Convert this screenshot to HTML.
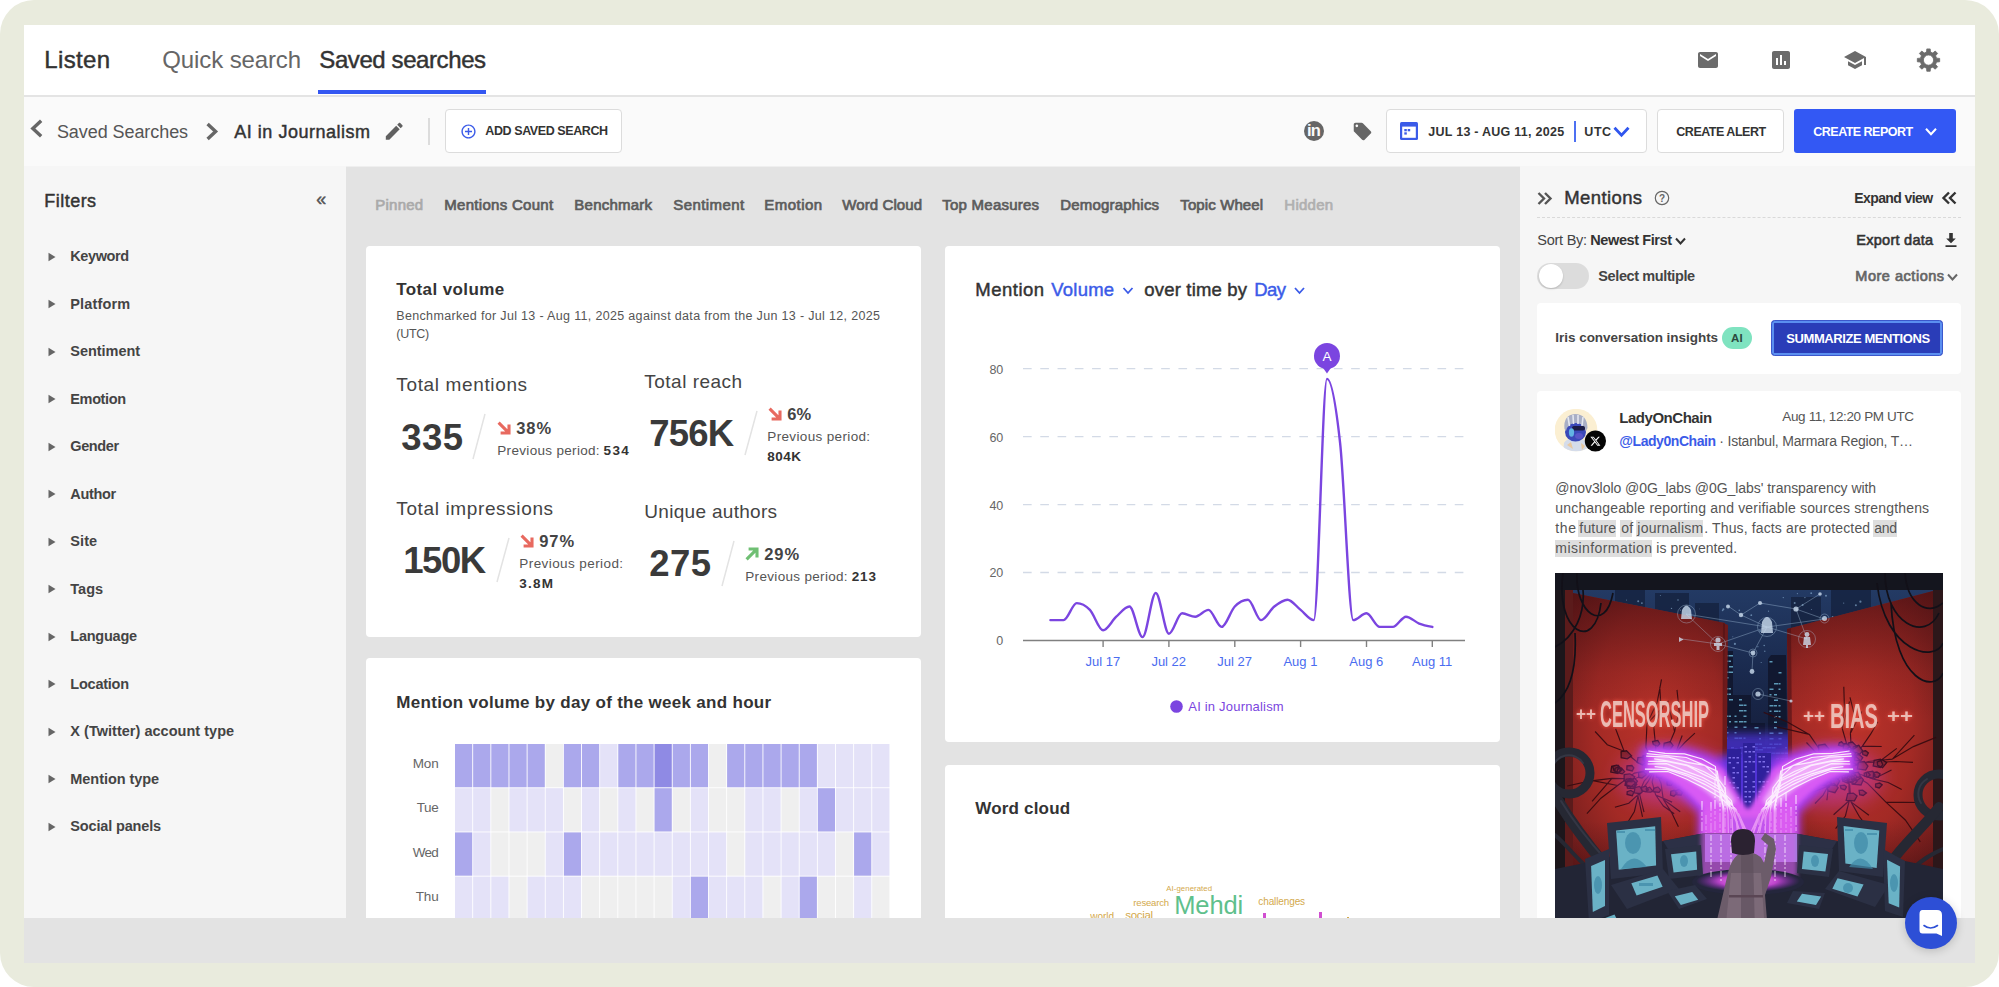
<!DOCTYPE html><html lang="en"><head><meta charset="utf-8"><title>Listen - Saved searches</title><style>
*{box-sizing:border-box;margin:0;padding:0}
html,body{width:1999px;height:987px;overflow:hidden;background:#fff}
body{font-family:"Liberation Sans",Arial,sans-serif;position:relative}
.a{position:absolute}
.t{position:absolute;white-space:nowrap}
#frame{position:absolute;left:0;top:0;width:1999px;height:987px;background:#e9ebdd;border-radius:34px}
#app{position:absolute;left:24px;top:25px;width:1951px;height:938px;background:#e3e3e3;overflow:hidden}
.card{position:absolute;background:#fff;border-radius:4px;overflow:hidden}
.btn{position:absolute;background:#fff;border:1px solid #dcdcdc;border-radius:4px}
svg{position:absolute;overflow:visible}
</style></head><body>
<div id="frame"></div>
<div id="app"><div class="a" id="root" style="left:-24px;top:-25px;width:1999px;height:987px">
<div class="a" style="left:24px;top:25px;width:1951px;height:70px;background:#fff"></div>
<div class="a" style="left:24px;top:95px;width:1951px;height:2px;background:#e4e4e4"></div>
<span class="t" style="left:44.3px;top:44.0px;font-size:24px;line-height:31px;color:#333;-webkit-text-stroke:0.45px currentColor;letter-spacing:0.351px;">Listen</span>
<span class="t" style="left:162.3px;top:44.0px;font-size:24px;line-height:31px;color:#666;letter-spacing:-0.114px;">Quick search</span>
<span class="t" style="left:319.3px;top:44.0px;font-size:24px;line-height:31px;color:#333;-webkit-text-stroke:0.45px currentColor;letter-spacing:-0.408px;">Saved searches</span>
<div class="a" style="left:318px;top:90px;width:168px;height:4px;background:#3457f2"></div>
<svg style="left:1696.0px;top:48.0px" width="24" height="24" viewBox="0 0 24 24"><path fill="#6b6b6b" d="M20 4H4c-1.1 0-1.99.9-1.99 2L2 18c0 1.1.9 2 2 2h16c1.1 0 2-.9 2-2V6c0-1.1-.9-2-2-2zm0 4l-8 5-8-5V6l8 5 8-5v2z"/></svg>
<svg style="left:1769.3px;top:48.0px" width="24" height="24" viewBox="0 0 24 24"><path fill="#6b6b6b" d="M19 3H5c-1.1 0-2 .9-2 2v14c0 1.1.9 2 2 2h14c1.1 0 2-.9 2-2V5c0-1.1-.9-2-2-2zM9 17H7v-7h2v7zm4 0h-2V7h2v10zm4 0h-2v-4h2v4z"/></svg>
<svg style="left:1843.0px;top:48.0px" width="24" height="24" viewBox="0 0 24 24"><path fill="#6b6b6b" d="M5 13.18v4L12 21l7-3.82v-4L12 17l-7-3.82zM12 3L1 9l11 6 9-4.91V17h2V9L12 3z"/></svg>
<svg style="left:0;top:0" width="1999" height="987"><path d="M1926.53,52.04 L1926.81,48.93 L1930.19,48.93 L1930.47,52.04 L1932.81,53.00 L1935.21,51.01 L1937.59,53.39 L1935.60,55.79 L1936.56,58.13 L1939.67,58.41 L1939.67,61.79 L1936.56,62.07 L1935.60,64.41 L1937.59,66.81 L1935.21,69.19 L1932.81,67.20 L1930.47,68.16 L1930.19,71.27 L1926.81,71.27 L1926.53,68.16 L1924.19,67.20 L1921.79,69.19 L1919.41,66.81 L1921.40,64.41 L1920.44,62.07 L1917.33,61.79 L1917.33,58.41 L1920.44,58.13 L1921.40,55.79 L1919.41,53.39 L1921.79,51.01 L1924.19,53.00Z M1923.4,60.1 a5.1,5.1 0 1,0 10.2,0 a5.1,5.1 0 1,0 -10.2,0Z" fill="#6b6b6b" fill-rule="evenodd" stroke="#6b6b6b" stroke-width="0.8" stroke-linejoin="round"/></svg>
<div class="a" style="left:24px;top:97px;width:1951px;height:69px;background:#fafafa"></div>
<div class="a" style="left:24px;top:165.500px;width:1951px;height:1px;background:#efefef"></div>
<svg style="left:0;top:0" width="1999" height="987"><polyline points="41.15,120.85 32.85,128.6 41.15,136.35" fill="none" stroke="#666" stroke-width="3.4" stroke-linejoin="miter"/></svg>
<span class="t" style="left:56.9px;top:120.7px;font-size:18px;line-height:23px;color:#555;letter-spacing:-0.069px;">Saved Searches</span>
<svg style="left:0;top:0" width="1999" height="987"><polyline points="207.6,123.9 215.6,131.4 207.6,138.9" fill="none" stroke="#666" stroke-width="3.4" stroke-linejoin="miter"/></svg>
<span class="t" style="left:234.3px;top:120.9px;font-size:18px;line-height:23px;color:#333;-webkit-text-stroke:0.45px currentColor;letter-spacing:0.516px;">AI in Journalism</span>
<svg style="left:382.6px;top:119.9px" width="22.5" height="22.5" viewBox="0 0 24 24"><path fill="#606060" d="M3 17.25V21h3.75L17.81 9.94l-3.75-3.75L3 17.25zM20.71 7.04c.39-.39.39-1.02 0-1.41l-2.34-2.34c-.39-.39-1.02-.39-1.41 0l-1.83 1.83 3.75 3.75 1.83-1.83z"/></svg>
<div class="a" style="left:428px;top:118px;width:2px;height:27px;background:#dcdcdc"></div>
<div class="btn" style="left:445px;top:109px;width:177px;height:44px"></div>
<svg style="left:459.5px;top:122.5px" width="17" height="17" viewBox="0 0 24 24"><path fill="#3b5be8" d="M13 7h-2v4H7v2h4v4h2v-4h4v-2h-4V7zm-1-5C6.48 2 2 6.48 2 12s4.48 10 10 10 10-4.48 10-10S17.52 2 12 2zm0 18c-4.41 0-8-3.59-8-8s3.59-8 8-8 8 3.59 8 8-3.59 8-8 8z"/></svg>
<span class="t" style="left:485.3px;top:123.1px;font-size:12.5px;line-height:16px;color:#333;font-weight:700;letter-spacing:-0.410px;">ADD SAVED SEARCH</span>
<svg style="left:1303px;top:120px" width="22" height="22" viewBox="0 0 22 22"><circle cx="11" cy="11" r="10" fill="#666"/><text x="10.600" y="16.300" font-family="Liberation Sans,Arial,sans-serif" font-size="16.500" font-weight="700" fill="#fafafa" text-anchor="middle" letter-spacing="-0.800">in</text></svg>
<svg style="left:1352.0px;top:121.0px" width="21" height="21" viewBox="0 0 24 24"><path fill="#666" d="M21.41 11.58l-9-9C12.05 2.22 11.55 2 11 2H4c-1.1 0-2 .9-2 2v7c0 .55.22 1.05.59 1.42l9 9c.36.36.86.58 1.41.58.55 0 1.05-.22 1.41-.59l7-7c.37-.36.59-.86.59-1.41 0-.55-.23-1.06-.59-1.42zM5.5 7C4.67 7 4 6.33 4 5.500S4.67 4 5.500 4 7 4.67 7 5.500 6.330 7 5.500 7z"/></svg>
<div class="btn" style="left:1385.500px;top:109px;width:261px;height:44px"></div>
<svg style="left:1400px;top:122px" width="18" height="18" viewBox="0 0 18 18"><rect x="0" y="0" width="18" height="18" rx="1.500" fill="#3b5be8"/><rect x="2.200" y="4.600" width="13.600" height="11.200" fill="#fff"/><rect x="4.300" y="7" width="2.500" height="2.300" fill="#3b5be8"/><rect x="7.700" y="7" width="2.500" height="2.300" fill="#3b5be8"/><rect x="4.300" y="10.300" width="2.500" height="2.300" fill="#3b5be8"/></svg>
<span class="t" style="left:1428.3px;top:123.5px;font-size:12.5px;line-height:16px;color:#333;font-weight:700;letter-spacing:0.258px;">JUL 13 - AUG 11, 2025</span>
<div class="a" style="left:1574.200px;top:121px;width:1.600px;height:21px;background:#4d70f2"></div>
<span class="t" style="left:1584.3px;top:123.5px;font-size:12.5px;line-height:16px;color:#333;font-weight:700;letter-spacing:0.554px;">UTC</span>
<svg style="left:0;top:0" width="1999" height="987"><polyline points="1614.5,127.75 1621.5,135.25 1628.5,127.75" fill="none" stroke="#3056ee" stroke-width="2.8" stroke-linejoin="miter"/></svg>
<div class="btn" style="left:1656.500px;top:109px;width:127px;height:44px"></div>
<span class="t" style="left:1676.3px;top:123.5px;font-size:12.5px;line-height:16px;color:#333;font-weight:700;letter-spacing:-0.485px;">CREATE ALERT</span>
<div class="a" style="left:1794px;top:109px;width:162px;height:44px;background:#3358f4;border-radius:3px"></div>
<span class="t" style="left:1813.3px;top:123.5px;font-size:12.5px;line-height:16px;color:#fff;font-weight:700;letter-spacing:-0.519px;">CREATE REPORT</span>
<svg style="left:0;top:0" width="1999" height="987"><polyline points="1926.0,128.75 1931,134.25 1936.0,128.75" fill="none" stroke="#fff" stroke-width="2" stroke-linejoin="miter"/></svg>
<div class="a" style="left:24px;top:166px;width:322px;height:752px;background:#f6f6f6"></div>
<span class="t" style="left:44.3px;top:189.5px;font-size:18px;line-height:23px;color:#333;-webkit-text-stroke:0.45px currentColor;letter-spacing:0.466px;">Filters</span>
<span class="t" style="left:316.3px;top:187.5px;font-size:18px;line-height:23px;color:#555;-webkit-text-stroke:0.45px currentColor;letter-spacing:1.788px;">«</span>
<svg style="left:48px;top:251.5px" width="8" height="10"><polygon points="0.500,0.800 7.500,5 0.500,9.200" fill="#666"/></svg>
<span class="t" style="left:70.3px;top:247.0px;font-size:14.5px;line-height:19px;color:#444;font-weight:700;letter-spacing:-0.405px;">Keyword</span>
<svg style="left:48px;top:299.0px" width="8" height="10"><polygon points="0.500,0.800 7.500,5 0.500,9.200" fill="#666"/></svg>
<span class="t" style="left:70.3px;top:294.5px;font-size:14.5px;line-height:19px;color:#444;font-weight:700;letter-spacing:0.141px;">Platform</span>
<svg style="left:48px;top:346.5px" width="8" height="10"><polygon points="0.500,0.800 7.500,5 0.500,9.200" fill="#666"/></svg>
<span class="t" style="left:70.3px;top:342.0px;font-size:14.5px;line-height:19px;color:#444;font-weight:700;letter-spacing:-0.036px;">Sentiment</span>
<svg style="left:48px;top:394.0px" width="8" height="10"><polygon points="0.500,0.800 7.500,5 0.500,9.200" fill="#666"/></svg>
<span class="t" style="left:70.3px;top:389.5px;font-size:14.5px;line-height:19px;color:#444;font-weight:700;letter-spacing:-0.365px;">Emotion</span>
<svg style="left:48px;top:441.5px" width="8" height="10"><polygon points="0.500,0.800 7.500,5 0.500,9.200" fill="#666"/></svg>
<span class="t" style="left:70.3px;top:437.0px;font-size:14.5px;line-height:19px;color:#444;font-weight:700;letter-spacing:-0.392px;">Gender</span>
<svg style="left:48px;top:489.0px" width="8" height="10"><polygon points="0.500,0.800 7.500,5 0.500,9.200" fill="#666"/></svg>
<span class="t" style="left:70.3px;top:484.5px;font-size:14.5px;line-height:19px;color:#444;font-weight:700;letter-spacing:-0.342px;">Author</span>
<svg style="left:48px;top:536.5px" width="8" height="10"><polygon points="0.500,0.800 7.500,5 0.500,9.200" fill="#666"/></svg>
<span class="t" style="left:70.3px;top:532.0px;font-size:14.5px;line-height:19px;color:#444;font-weight:700;letter-spacing:0.070px;">Site</span>
<svg style="left:48px;top:584.0px" width="8" height="10"><polygon points="0.500,0.800 7.500,5 0.500,9.200" fill="#666"/></svg>
<span class="t" style="left:70.3px;top:579.5px;font-size:14.5px;line-height:19px;color:#444;font-weight:700;letter-spacing:0.013px;">Tags</span>
<svg style="left:48px;top:631.5px" width="8" height="10"><polygon points="0.500,0.800 7.500,5 0.500,9.200" fill="#666"/></svg>
<span class="t" style="left:70.3px;top:627.0px;font-size:14.5px;line-height:19px;color:#444;font-weight:700;letter-spacing:-0.238px;">Language</span>
<svg style="left:48px;top:679.0px" width="8" height="10"><polygon points="0.500,0.800 7.500,5 0.500,9.200" fill="#666"/></svg>
<span class="t" style="left:70.3px;top:674.5px;font-size:14.5px;line-height:19px;color:#444;font-weight:700;letter-spacing:-0.229px;">Location</span>
<svg style="left:48px;top:726.5px" width="8" height="10"><polygon points="0.500,0.800 7.500,5 0.500,9.200" fill="#666"/></svg>
<span class="t" style="left:70.3px;top:722.0px;font-size:14.5px;line-height:19px;color:#444;font-weight:700;letter-spacing:0.024px;">X (Twitter) account type</span>
<svg style="left:48px;top:774.0px" width="8" height="10"><polygon points="0.500,0.800 7.500,5 0.500,9.200" fill="#666"/></svg>
<span class="t" style="left:70.3px;top:769.5px;font-size:14.5px;line-height:19px;color:#444;font-weight:700;letter-spacing:-0.054px;">Mention type</span>
<svg style="left:48px;top:821.5px" width="8" height="10"><polygon points="0.500,0.800 7.500,5 0.500,9.200" fill="#666"/></svg>
<span class="t" style="left:70.3px;top:817.0px;font-size:14.5px;line-height:19px;color:#444;font-weight:700;letter-spacing:-0.155px;">Social panels</span>
<span class="t" style="left:375.3px;top:194.5px;font-size:15px;line-height:20px;color:#aaa;-webkit-text-stroke:0.7px currentColor;letter-spacing:0.218px;">Pinned</span>
<span class="t" style="left:444.3px;top:194.5px;font-size:15px;line-height:20px;color:#5c5c5c;-webkit-text-stroke:0.7px currentColor;letter-spacing:0.287px;">Mentions Count</span>
<span class="t" style="left:574.3px;top:194.5px;font-size:15px;line-height:20px;color:#5c5c5c;-webkit-text-stroke:0.7px currentColor;letter-spacing:0.241px;">Benchmark</span>
<span class="t" style="left:673.3px;top:194.5px;font-size:15px;line-height:20px;color:#5c5c5c;-webkit-text-stroke:0.7px currentColor;letter-spacing:0.407px;">Sentiment</span>
<span class="t" style="left:764.3px;top:194.5px;font-size:15px;line-height:20px;color:#5c5c5c;-webkit-text-stroke:0.7px currentColor;letter-spacing:0.461px;">Emotion</span>
<span class="t" style="left:842.3px;top:194.5px;font-size:15px;line-height:20px;color:#5c5c5c;-webkit-text-stroke:0.7px currentColor;letter-spacing:0.096px;">Word Cloud</span>
<span class="t" style="left:942.3px;top:194.5px;font-size:15px;line-height:20px;color:#5c5c5c;-webkit-text-stroke:0.7px currentColor;letter-spacing:0.234px;">Top Measures</span>
<span class="t" style="left:1060.3px;top:194.5px;font-size:15px;line-height:20px;color:#5c5c5c;-webkit-text-stroke:0.7px currentColor;letter-spacing:0.189px;">Demographics</span>
<span class="t" style="left:1180.3px;top:194.5px;font-size:15px;line-height:20px;color:#5c5c5c;-webkit-text-stroke:0.7px currentColor;letter-spacing:0.109px;">Topic Wheel</span>
<span class="t" style="left:1284.3px;top:194.5px;font-size:15px;line-height:20px;color:#b0b0b0;-webkit-text-stroke:0.7px currentColor;letter-spacing:0.252px;">Hidden</span>
<div class="card" style="left:366px;top:246px;width:555px;height:391px"></div>
<span class="t" style="left:396.3px;top:279.0px;font-size:17px;line-height:22px;color:#333;font-weight:700;letter-spacing:0.384px;">Total volume</span>
<span class="t" style="left:396.3px;top:308.0px;font-size:12.5px;line-height:16px;color:#555;letter-spacing:0.334px;">Benchmarked for Jul 13 - Aug 11, 2025 against data from the Jun 13 - Jul 12, 2025</span>
<span class="t" style="left:396.3px;top:326.0px;font-size:12.5px;line-height:16px;color:#555;letter-spacing:-0.305px;">(UTC)</span>
<span class="t" style="left:396.3px;top:371.9px;font-size:19px;line-height:25px;color:#444;letter-spacing:0.638px;">Total mentions</span>
<span class="t" style="left:401.3px;top:414.1px;font-size:36.5px;line-height:47px;color:#3a3a3a;font-weight:700;letter-spacing:0.449px;">335</span>
<svg style="left:0;top:0" width="1999" height="987"><line x1="473" y1="459" x2="485" y2="414" stroke="#e3e3e3" stroke-width="1.500"/></svg>
<svg style="left:497px;top:421px" width="14" height="14" viewBox="0 0 14 14"><path d="M1.600 1.600 L11.300 11.300 M3.600 12 H12 V3.600" fill="none" stroke="#e8695f" stroke-width="3.100"/></svg>
<span class="t" style="left:516.3px;top:417.5px;font-size:16.5px;line-height:21px;color:#444;font-weight:700;letter-spacing:0.888px;">38%</span>
<span class="t" style="left:497.3px;top:442.4px;font-size:13.5px;line-height:18px;color:#555;letter-spacing:0.317px;">Previous period:</span>
<span class="t" style="left:603.5px;top:442.4px;font-size:13.5px;line-height:18px;color:#333;font-weight:700;letter-spacing:1.388px;">534</span>
<span class="t" style="left:644.3px;top:368.5px;font-size:19px;line-height:25px;color:#444;letter-spacing:0.486px;">Total reach</span>
<span class="t" style="left:649.3px;top:409.9px;font-size:36.5px;line-height:47px;color:#3a3a3a;font-weight:700;letter-spacing:-0.821px;">756K</span>
<svg style="left:0;top:0" width="1999" height="987"><line x1="745" y1="455" x2="757" y2="411" stroke="#e3e3e3" stroke-width="1.500"/></svg>
<svg style="left:768px;top:407px" width="14" height="14" viewBox="0 0 14 14"><path d="M1.600 1.600 L11.300 11.300 M3.600 12 H12 V3.600" fill="none" stroke="#e8695f" stroke-width="3.100"/></svg>
<span class="t" style="left:787.3px;top:403.5px;font-size:16.5px;line-height:21px;color:#444;font-weight:700;letter-spacing:-0.048px;">6%</span>
<span class="t" style="left:767.3px;top:428.0px;font-size:13.5px;line-height:18px;color:#555;letter-spacing:0.350px;">Previous period:</span>
<span class="t" style="left:767.3px;top:448.0px;font-size:13.5px;line-height:18px;color:#333;font-weight:700;letter-spacing:0.509px;">804K</span>
<span class="t" style="left:396.3px;top:495.5px;font-size:19px;line-height:25px;color:#444;letter-spacing:0.626px;">Total impressions</span>
<span class="t" style="left:403.3px;top:536.5px;font-size:36.5px;line-height:47px;color:#3a3a3a;font-weight:700;letter-spacing:-1.487px;">150K</span>
<svg style="left:0;top:0" width="1999" height="987"><line x1="497" y1="582" x2="509" y2="538" stroke="#e3e3e3" stroke-width="1.500"/></svg>
<svg style="left:520px;top:534px" width="14" height="14" viewBox="0 0 14 14"><path d="M1.600 1.600 L11.300 11.300 M3.600 12 H12 V3.600" fill="none" stroke="#e8695f" stroke-width="3.100"/></svg>
<span class="t" style="left:539.3px;top:530.5px;font-size:16.5px;line-height:21px;color:#444;font-weight:700;letter-spacing:0.888px;">97%</span>
<span class="t" style="left:519.3px;top:555.0px;font-size:13.5px;line-height:18px;color:#555;letter-spacing:0.417px;">Previous period:</span>
<span class="t" style="left:519.3px;top:575.0px;font-size:13.5px;line-height:18px;color:#333;font-weight:700;letter-spacing:1.263px;">3.8M</span>
<span class="t" style="left:644.3px;top:498.5px;font-size:19px;line-height:25px;color:#444;letter-spacing:0.303px;">Unique authors</span>
<span class="t" style="left:649.3px;top:539.8px;font-size:36.5px;line-height:47px;color:#3a3a3a;font-weight:700;letter-spacing:0.449px;">275</span>
<svg style="left:0;top:0" width="1999" height="987"><line x1="722" y1="586" x2="734" y2="541" stroke="#e3e3e3" stroke-width="1.500"/></svg>
<svg style="left:745px;top:547px" width="14" height="14" viewBox="0 0 14 14"><path d="M1.600 12.400 L11.300 2.700 M3.600 2 H12 V10.400" fill="none" stroke="#6fbf73" stroke-width="3.100"/></svg>
<span class="t" style="left:764.3px;top:543.5px;font-size:16.5px;line-height:21px;color:#444;font-weight:700;letter-spacing:0.888px;">29%</span>
<span class="t" style="left:745.3px;top:568.4px;font-size:13.5px;line-height:18px;color:#555;letter-spacing:0.317px;">Previous period:</span>
<span class="t" style="left:851.7px;top:568.4px;font-size:13.5px;line-height:18px;color:#333;font-weight:700;letter-spacing:0.888px;">213</span>
<div class="card" style="left:366px;top:658px;width:555px;height:270px"></div>
<span class="t" style="left:396.3px;top:692.0px;font-size:17px;line-height:22px;color:#333;font-weight:700;letter-spacing:0.296px;">Mention volume by day of the week and hour</span>
<svg style="left:0;top:0" width="1999" height="987"><rect x="455.00" y="744.00" width="17.24" height="43.30" fill="#aba8ec"/><rect x="473.14" y="744.00" width="17.24" height="43.30" fill="#aba8ec"/><rect x="491.28" y="744.00" width="17.24" height="43.30" fill="#aba8ec"/><rect x="509.42" y="744.00" width="17.24" height="43.30" fill="#aba8ec"/><rect x="527.56" y="744.00" width="17.24" height="43.30" fill="#aba8ec"/><rect x="545.70" y="744.00" width="17.24" height="43.30" fill="#efefef"/><rect x="563.84" y="744.00" width="17.24" height="43.30" fill="#aba8ec"/><rect x="581.98" y="744.00" width="17.24" height="43.30" fill="#aba8ec"/><rect x="600.12" y="744.00" width="17.24" height="43.30" fill="#e4e2f8"/><rect x="618.26" y="744.00" width="17.24" height="43.30" fill="#aba8ec"/><rect x="636.40" y="744.00" width="17.24" height="43.30" fill="#aba8ec"/><rect x="654.54" y="744.00" width="17.24" height="43.30" fill="#8f8ae4"/><rect x="672.68" y="744.00" width="17.24" height="43.30" fill="#aba8ec"/><rect x="690.82" y="744.00" width="17.24" height="43.30" fill="#aba8ec"/><rect x="708.96" y="744.00" width="17.24" height="43.30" fill="#efefef"/><rect x="727.10" y="744.00" width="17.24" height="43.30" fill="#aba8ec"/><rect x="745.24" y="744.00" width="17.24" height="43.30" fill="#aba8ec"/><rect x="763.38" y="744.00" width="17.24" height="43.30" fill="#aba8ec"/><rect x="781.52" y="744.00" width="17.24" height="43.30" fill="#aba8ec"/><rect x="799.66" y="744.00" width="17.24" height="43.30" fill="#aba8ec"/><rect x="817.80" y="744.00" width="17.24" height="43.30" fill="#e4e2f8"/><rect x="835.94" y="744.00" width="17.24" height="43.30" fill="#e4e2f8"/><rect x="854.08" y="744.00" width="17.24" height="43.30" fill="#e4e2f8"/><rect x="872.22" y="744.00" width="17.24" height="43.30" fill="#e4e2f8"/><rect x="455.00" y="788.20" width="17.24" height="43.30" fill="#e4e2f8"/><rect x="473.14" y="788.20" width="17.24" height="43.30" fill="#e4e2f8"/><rect x="491.28" y="788.20" width="17.24" height="43.30" fill="#efefef"/><rect x="509.42" y="788.20" width="17.24" height="43.30" fill="#e4e2f8"/><rect x="527.56" y="788.20" width="17.24" height="43.30" fill="#e4e2f8"/><rect x="545.70" y="788.20" width="17.24" height="43.30" fill="#e4e2f8"/><rect x="563.84" y="788.20" width="17.24" height="43.30" fill="#efefef"/><rect x="581.98" y="788.20" width="17.24" height="43.30" fill="#e4e2f8"/><rect x="600.12" y="788.20" width="17.24" height="43.30" fill="#efefef"/><rect x="618.26" y="788.20" width="17.24" height="43.30" fill="#e4e2f8"/><rect x="636.40" y="788.20" width="17.24" height="43.30" fill="#efefef"/><rect x="654.54" y="788.20" width="17.24" height="43.30" fill="#aba8ec"/><rect x="672.68" y="788.20" width="17.24" height="43.30" fill="#efefef"/><rect x="690.82" y="788.20" width="17.24" height="43.30" fill="#e4e2f8"/><rect x="708.96" y="788.20" width="17.24" height="43.30" fill="#efefef"/><rect x="727.10" y="788.20" width="17.24" height="43.30" fill="#efefef"/><rect x="745.24" y="788.20" width="17.24" height="43.30" fill="#e4e2f8"/><rect x="763.38" y="788.20" width="17.24" height="43.30" fill="#e4e2f8"/><rect x="781.52" y="788.20" width="17.24" height="43.30" fill="#efefef"/><rect x="799.66" y="788.20" width="17.24" height="43.30" fill="#e4e2f8"/><rect x="817.80" y="788.20" width="17.24" height="43.30" fill="#aba8ec"/><rect x="835.94" y="788.20" width="17.24" height="43.30" fill="#e4e2f8"/><rect x="854.08" y="788.20" width="17.24" height="43.30" fill="#e4e2f8"/><rect x="872.22" y="788.20" width="17.24" height="43.30" fill="#e4e2f8"/><rect x="455.00" y="832.40" width="17.24" height="43.30" fill="#aba8ec"/><rect x="473.14" y="832.40" width="17.24" height="43.30" fill="#e4e2f8"/><rect x="491.28" y="832.40" width="17.24" height="43.30" fill="#efefef"/><rect x="509.42" y="832.40" width="17.24" height="43.30" fill="#efefef"/><rect x="527.56" y="832.40" width="17.24" height="43.30" fill="#efefef"/><rect x="545.70" y="832.40" width="17.24" height="43.30" fill="#e4e2f8"/><rect x="563.84" y="832.40" width="17.24" height="43.30" fill="#aba8ec"/><rect x="581.98" y="832.40" width="17.24" height="43.30" fill="#e4e2f8"/><rect x="600.12" y="832.40" width="17.24" height="43.30" fill="#e4e2f8"/><rect x="618.26" y="832.40" width="17.24" height="43.30" fill="#e4e2f8"/><rect x="636.40" y="832.40" width="17.24" height="43.30" fill="#e4e2f8"/><rect x="654.54" y="832.40" width="17.24" height="43.30" fill="#e4e2f8"/><rect x="672.68" y="832.40" width="17.24" height="43.30" fill="#e4e2f8"/><rect x="690.82" y="832.40" width="17.24" height="43.30" fill="#e4e2f8"/><rect x="708.96" y="832.40" width="17.24" height="43.30" fill="#e4e2f8"/><rect x="727.10" y="832.40" width="17.24" height="43.30" fill="#efefef"/><rect x="745.24" y="832.40" width="17.24" height="43.30" fill="#e4e2f8"/><rect x="763.38" y="832.40" width="17.24" height="43.30" fill="#e4e2f8"/><rect x="781.52" y="832.40" width="17.24" height="43.30" fill="#e4e2f8"/><rect x="799.66" y="832.40" width="17.24" height="43.30" fill="#e4e2f8"/><rect x="817.80" y="832.40" width="17.24" height="43.30" fill="#e4e2f8"/><rect x="835.94" y="832.40" width="17.24" height="43.30" fill="#efefef"/><rect x="854.08" y="832.40" width="17.24" height="43.30" fill="#aba8ec"/><rect x="872.22" y="832.40" width="17.24" height="43.30" fill="#e4e2f8"/><rect x="455.00" y="876.60" width="17.24" height="43.30" fill="#e4e2f8"/><rect x="473.14" y="876.60" width="17.24" height="43.30" fill="#e4e2f8"/><rect x="491.28" y="876.60" width="17.24" height="43.30" fill="#e4e2f8"/><rect x="509.42" y="876.60" width="17.24" height="43.30" fill="#efefef"/><rect x="527.56" y="876.60" width="17.24" height="43.30" fill="#e4e2f8"/><rect x="545.70" y="876.60" width="17.24" height="43.30" fill="#e4e2f8"/><rect x="563.84" y="876.60" width="17.24" height="43.30" fill="#e4e2f8"/><rect x="581.98" y="876.60" width="17.24" height="43.30" fill="#efefef"/><rect x="600.12" y="876.60" width="17.24" height="43.30" fill="#efefef"/><rect x="618.26" y="876.60" width="17.24" height="43.30" fill="#efefef"/><rect x="636.40" y="876.60" width="17.24" height="43.30" fill="#efefef"/><rect x="654.54" y="876.60" width="17.24" height="43.30" fill="#efefef"/><rect x="672.68" y="876.60" width="17.24" height="43.30" fill="#e4e2f8"/><rect x="690.82" y="876.60" width="17.24" height="43.30" fill="#aba8ec"/><rect x="708.96" y="876.60" width="17.24" height="43.30" fill="#e4e2f8"/><rect x="727.10" y="876.60" width="17.24" height="43.30" fill="#e4e2f8"/><rect x="745.24" y="876.60" width="17.24" height="43.30" fill="#e4e2f8"/><rect x="763.38" y="876.60" width="17.24" height="43.30" fill="#efefef"/><rect x="781.52" y="876.60" width="17.24" height="43.30" fill="#e4e2f8"/><rect x="799.66" y="876.60" width="17.24" height="43.30" fill="#aba8ec"/><rect x="817.80" y="876.60" width="17.24" height="43.30" fill="#efefef"/><rect x="835.94" y="876.60" width="17.24" height="43.30" fill="#efefef"/><rect x="854.08" y="876.60" width="17.24" height="43.30" fill="#e4e2f8"/><rect x="872.22" y="876.60" width="17.24" height="43.30" fill="#efefef"/></svg>
<span class="t" style="left:412.8px;top:754.8px;font-size:13.5px;line-height:18px;color:#666;letter-spacing:-0.181px;">Mon</span>
<span class="t" style="left:416.8px;top:799.0px;font-size:13.5px;line-height:18px;color:#666;letter-spacing:-0.431px;">Tue</span>
<span class="t" style="left:412.8px;top:843.5px;font-size:13.5px;line-height:18px;color:#666;letter-spacing:-0.808px;">Wed</span>
<span class="t" style="left:415.8px;top:887.8px;font-size:13.5px;line-height:18px;color:#666;letter-spacing:-0.181px;">Thu</span>
<div class="card" style="left:945px;top:246px;width:555px;height:496px"></div>
<span class="t" style="left:975.3px;top:278.0px;font-size:18.5px;line-height:24px;color:#333;-webkit-text-stroke:0.45px currentColor;letter-spacing:0.497px;">Mention</span>
<span class="t" style="left:1051.3px;top:278.0px;font-size:18.5px;line-height:24px;color:#3b5be8;-webkit-text-stroke:0.45px currentColor;letter-spacing:0.219px;">Volume</span>
<svg style="left:0;top:0" width="1999" height="987"><polyline points="1123.5,288.0 1128,293.0 1132.5,288.0" fill="none" stroke="#3b5be8" stroke-width="1.8" stroke-linejoin="miter"/></svg>
<span class="t" style="left:1144.3px;top:278.0px;font-size:18.5px;line-height:24px;color:#333;-webkit-text-stroke:0.45px currentColor;letter-spacing:0.186px;">over time by</span>
<span class="t" style="left:1254.3px;top:278.0px;font-size:18.5px;line-height:24px;color:#3b5be8;-webkit-text-stroke:0.45px currentColor;letter-spacing:-0.549px;">Day</span>
<svg style="left:0;top:0" width="1999" height="987"><polyline points="1295.0,288.0 1299.5,293.0 1304.0,288.0" fill="none" stroke="#3b5be8" stroke-width="1.8" stroke-linejoin="miter"/></svg>
<svg style="left:0;top:0" width="1999" height="987" font-family="Liberation Sans,Arial,sans-serif"><line x1="1023" x2="1465" y1="572.5" y2="572.5" stroke="#d3dae6" stroke-width="1.300" stroke-dasharray="8.650 8.620"/><line x1="1023" x2="1465" y1="504.6" y2="504.6" stroke="#d3dae6" stroke-width="1.300" stroke-dasharray="8.650 8.620"/><line x1="1023" x2="1465" y1="436.6" y2="436.6" stroke="#d3dae6" stroke-width="1.300" stroke-dasharray="8.650 8.620"/><line x1="1023" x2="1465" y1="368.7" y2="368.7" stroke="#d3dae6" stroke-width="1.300" stroke-dasharray="8.650 8.620"/><line x1="1023" x2="1465" y1="640.5" y2="640.5" stroke="#808080" stroke-width="1.400"/><line x1="1103.1" x2="1103.1" y1="640.5" y2="647.0" stroke="#808080" stroke-width="1.400"/><line x1="1168.9" x2="1168.9" y1="640.5" y2="647.0" stroke="#808080" stroke-width="1.400"/><line x1="1234.8" x2="1234.8" y1="640.5" y2="647.0" stroke="#808080" stroke-width="1.400"/><line x1="1300.6" x2="1300.6" y1="640.5" y2="647.0" stroke="#808080" stroke-width="1.400"/><line x1="1366.5" x2="1366.5" y1="640.5" y2="647.0" stroke="#808080" stroke-width="1.400"/><line x1="1432.3" x2="1432.3" y1="640.5" y2="647.0" stroke="#808080" stroke-width="1.400"/><path d="M1050.40,620.12 C1054.79,620.12 1059.18,620.12 1063.57,620.12 C1067.96,620.12 1072.35,603.13 1076.74,603.13 C1081.13,603.13 1085.52,605.39 1089.91,609.92 C1094.30,614.45 1098.69,630.31 1103.08,630.31 C1107.47,630.31 1111.86,620.68 1116.25,616.72 C1120.64,612.75 1125.03,606.52 1129.42,606.52 C1133.81,606.52 1138.20,637.10 1142.59,637.10 C1146.98,637.10 1151.37,592.93 1155.76,592.93 C1160.15,592.93 1164.54,633.71 1168.93,633.71 C1173.32,633.71 1177.71,613.32 1182.10,613.32 C1186.49,613.32 1190.88,616.72 1195.27,616.72 C1199.66,616.72 1204.05,609.92 1208.44,609.92 C1212.83,609.92 1217.22,626.91 1221.61,626.91 C1226.00,626.91 1230.39,611.05 1234.78,606.52 C1239.17,602.00 1243.56,599.73 1247.95,599.73 C1252.34,599.73 1256.73,620.12 1261.12,620.12 C1265.51,620.12 1269.90,609.92 1274.29,606.52 C1278.68,603.13 1283.07,599.73 1287.46,599.73 C1291.85,599.73 1296.24,606.52 1300.63,609.92 C1305.02,613.32 1309.41,620.12 1313.80,620.12 C1318.19,620.12 1322.58,378.89 1326.97,378.89 C1331.36,378.89 1335.75,403.24 1340.14,443.44 C1344.53,483.65 1348.92,620.12 1353.31,620.12 C1357.70,620.12 1362.09,613.32 1366.48,613.32 C1370.87,613.32 1375.26,626.91 1379.65,626.91 C1384.04,626.91 1388.43,626.91 1392.82,626.91 C1397.21,626.91 1401.60,616.72 1405.99,616.72 C1410.38,616.72 1414.77,621.81 1419.16,623.51 C1423.55,625.21 1427.94,626.06 1432.33,626.91" fill="none" stroke="#7b45e0" stroke-width="2.400" stroke-linejoin="round" stroke-linecap="round"/><path d="M1320.97,365 L1326.97,373.5 L1332.97,365Z" fill="#7b45e0"/><circle cx="1326.97" cy="356" r="13" fill="#7b45e0"/><text x="1326.97" y="360.800" font-size="13.500" fill="#fff" text-anchor="middle">A</text><circle cx="1176.500" cy="706.500" r="6.300" fill="#7b45e0"/></svg>
<span class="t" style="left:996.3px;top:633.4px;font-size:12.5px;line-height:16px;color:#666;">0</span>
<span class="t" style="left:989.4px;top:565.4px;font-size:12.5px;line-height:16px;color:#666;">20</span>
<span class="t" style="left:989.4px;top:497.5px;font-size:12.5px;line-height:16px;color:#666;">40</span>
<span class="t" style="left:989.4px;top:429.5px;font-size:12.5px;line-height:16px;color:#666;">60</span>
<span class="t" style="left:989.4px;top:361.6px;font-size:12.5px;line-height:16px;color:#666;">80</span>
<span class="t" style="left:1085.5px;top:653.0px;font-size:13px;line-height:17px;color:#4a6cf0;">Jul 17</span>
<span class="t" style="left:1151.4px;top:653.0px;font-size:13px;line-height:17px;color:#4a6cf0;">Jul 22</span>
<span class="t" style="left:1217.2px;top:653.0px;font-size:13px;line-height:17px;color:#4a6cf0;">Jul 27</span>
<span class="t" style="left:1283.4px;top:653.0px;font-size:13px;line-height:17px;color:#4a6cf0;">Aug 1</span>
<span class="t" style="left:1349.3px;top:653.0px;font-size:13px;line-height:17px;color:#4a6cf0;">Aug 6</span>
<span class="t" style="left:1412.0px;top:653.0px;font-size:13px;line-height:17px;color:#4a6cf0;">Aug 11</span>
<span class="t" style="left:1188.3px;top:698.2px;font-size:13px;line-height:17px;color:#7b45e0;letter-spacing:0.195px;">AI in Journalism</span>
<div class="card" style="left:945px;top:765px;width:555px;height:170px"></div>
<span class="t" style="left:975.3px;top:797.5px;font-size:17px;line-height:22px;color:#333;font-weight:700;letter-spacing:0.181px;">Word cloud</span>
<div class="a" style="left:945px;top:840px;width:555px;height:78px;overflow:hidden"><div class="a" style="left:-945px;top:-840px">
<span class="t" style="left:1166.3px;top:884.0px;font-size:7.8px;line-height:10px;color:#d3a94c;letter-spacing:0.065px;">AI-generated</span>
<span class="t" style="left:1133.3px;top:897.0px;font-size:9.5px;line-height:12px;color:#d3a94c;letter-spacing:-0.167px;">research</span>
<span class="t" style="left:1174.3px;top:889.0px;font-size:25.5px;line-height:33px;color:#5fc08c;letter-spacing:-0.164px;">Mehdi</span>
<span class="t" style="left:1258.3px;top:895.0px;font-size:10px;line-height:13px;color:#d3a94c;letter-spacing:-0.113px;">challenges</span>
<span class="t" style="left:1090.3px;top:909.5px;font-size:10px;line-height:13px;color:#d3a94c;letter-spacing:-0.026px;">world</span>
<span class="t" style="left:1125.3px;top:907.5px;font-size:11.5px;line-height:15px;color:#d3a94c;letter-spacing:-0.320px;">social</span>
<div class="a" style="left:1263px;top:913px;width:2.500px;height:8px;background:#d14fd1"></div><div class="a" style="left:1319px;top:912px;width:2.500px;height:8px;background:#d14fd1"></div><div class="a" style="left:1347px;top:916.500px;width:1.500px;height:3px;background:#d3a94c"></div>
</div></div>
<div class="a" style="left:1520px;top:166px;width:455px;height:752px;background:#f6f6f6"></div>
<svg style="left:0;top:0" width="1999" height="987"><polyline points="1538.5,193.0 1544.0,198.5 1538.5,204.0" fill="none" stroke="#555" stroke-width="2.4"/><polyline points="1545.0,193.0 1550.5,198.5 1545.0,204.0" fill="none" stroke="#555" stroke-width="2.4"/></svg>
<span class="t" style="left:1564.3px;top:186.0px;font-size:18.5px;line-height:24px;color:#333;-webkit-text-stroke:0.45px currentColor;letter-spacing:0.391px;">Mentions</span>
<svg style="left:1654px;top:190px" width="16" height="16" viewBox="0 0 16 16" font-family="Liberation Sans,Arial,sans-serif"><circle cx="8" cy="8" r="6.700" fill="none" stroke="#666" stroke-width="1.200"/><text x="8" y="11.600" font-size="10" font-weight="700" fill="#666" text-anchor="middle">?</text></svg>
<span class="t" style="left:1854.3px;top:188.5px;font-size:14px;line-height:18px;color:#333;font-weight:700;letter-spacing:-0.600px;">Expand view</span>
<svg style="left:0;top:0" width="1999" height="987"><polyline points="1949.0,192.5 1943.5,198 1949.0,203.5" fill="none" stroke="#333" stroke-width="2.4"/><polyline points="1955.5,192.5 1950.0,198 1955.5,203.5" fill="none" stroke="#333" stroke-width="2.4"/></svg>
<div class="a" style="left:1537px;top:216.500px;width:424px;height:0;border-top:1.500px dashed #d9d9d9"></div>
<span class="t" style="left:1537.3px;top:230.5px;font-size:14.5px;line-height:19px;color:#444;letter-spacing:-0.252px;">Sort By:</span>
<span class="t" style="left:1590.3px;top:230.5px;font-size:14.5px;line-height:19px;color:#333;font-weight:700;letter-spacing:-0.401px;">Newest First</span>
<svg style="left:0;top:0" width="1999" height="987"><polyline points="1676.0,238.5 1680.5,243.5 1685.0,238.5" fill="none" stroke="#333" stroke-width="2" stroke-linejoin="miter"/></svg>
<span class="t" style="left:1856.3px;top:230.8px;font-size:14.5px;line-height:19px;color:#333;-webkit-text-stroke:0.6px currentColor;letter-spacing:0.266px;">Export data</span>
<svg style="left:1944px;top:232px" width="14" height="16" viewBox="0 0 14 16"><path d="M5.200 1h3.600v5.500h3L7 11.300 2.200 6.500h3z M1.500 13.200h11v1.900h-11z" fill="#333"/></svg>
<div class="a" style="left:1537px;top:263px;width:52px;height:26px;border-radius:13px;background:#dcdcdc"></div>
<div class="a" style="left:1539px;top:264px;width:24px;height:24px;border-radius:50%;background:#fff;box-shadow:0 1px 2px rgba(0,0,0,.18)"></div>
<span class="t" style="left:1598.3px;top:266.5px;font-size:14.5px;line-height:19px;color:#444;font-weight:700;letter-spacing:-0.394px;">Select multiple</span>
<span class="t" style="left:1855.3px;top:266.5px;font-size:14.5px;line-height:19px;color:#666;-webkit-text-stroke:0.7px currentColor;letter-spacing:0.528px;">More actions</span>
<svg style="left:0;top:0" width="1999" height="987"><polyline points="1948.0,274.5 1952.5,279.5 1957.0,274.5" fill="none" stroke="#666" stroke-width="2" stroke-linejoin="miter"/></svg>
<div class="card" style="left:1537px;top:303px;width:424px;height:71px"></div>
<span class="t" style="left:1555.3px;top:329.0px;font-size:13.5px;line-height:18px;color:#444;font-weight:700;letter-spacing:-0.029px;">Iris conversation insights</span>
<div class="a" style="left:1722px;top:327px;width:30px;height:22px;border-radius:11px;background:#7fe3c0"></div>
<span class="t" style="left:1730.9px;top:330.7px;font-size:11.5px;line-height:15px;color:#2c4a40;font-weight:700;letter-spacing:0.300px;">AI</span>
<div class="a" style="left:1771px;top:320px;width:172px;height:36px;border-radius:3.500px;background:#2a3db8;border:1px solid #3c58cc;box-shadow:inset 0 0 0 2px #5b8ff0"></div>
<span class="t" style="left:1786.3px;top:329.5px;font-size:13px;line-height:17px;color:#fff;font-weight:700;letter-spacing:-0.420px;">SUMMARIZE MENTIONS</span>
<div class="card" style="left:1537px;top:391px;width:424px;height:560px"></div>
<svg style="left:1555.100px;top:408.500px" width="56" height="46" viewBox="0 0 56 46">
<defs><clipPath id="avc"><circle cx="21" cy="21" r="21.300"/></clipPath><filter id="avb" x="-10%" y="-10%" width="120%" height="120%"><feGaussianBlur stdDeviation="0.700"/></filter></defs>
<g clip-path="url(#avc)"><rect width="43" height="43" fill="#fbefd2"/>
<g filter="url(#avb)">
<path d="M9 34 Q12 29 20 30 Q30 29 33 35 L35 44 L8 44Z" fill="#d5dcea"/>
<path d="M12 36 L16 33 L18 40Z M26 34 L30 37 L27 41Z" fill="#e8c9a0"/>
<ellipse cx="20.500" cy="23" rx="10.500" ry="9.500" fill="#3b49b9"/>
<path d="M9.500 20 Q8 6 20 5 Q32 5 32.500 19 L31 22 Q29 14 21 14 Q13 14 11 22Z" fill="#a9afc6"/>
<path d="M13 8 L14.500 17 M18 6 L18.500 15 M23 6 L23 15 M28 8 L27 17" stroke="#e4e7f0" stroke-width="1.600" fill="none"/>
<rect x="17" y="17" width="13" height="4.500" rx="2" fill="#1b1d45"/>
<ellipse cx="16.500" cy="23.500" rx="2.600" ry="4.200" fill="#62b4e4"/>
<ellipse cx="24" cy="27" rx="4" ry="3" fill="#5a55c8"/>
</g></g>
<circle cx="40.400" cy="32" r="10.600" fill="#050505"/>
<g transform="translate(34.800,26.600) scale(0.465)"><path fill="#fff" d="M18.244 2.250h3.308l-7.227 8.260 8.502 11.240H16.170l-5.214-6.817L4.990 21.750H1.680l7.730-8.835L1.254 2.250H8.080l4.713 6.231zm-1.161 17.520h1.833L7.084 4.126H5.117z"/></g>
</svg>
<span class="t" style="left:1619.3px;top:408.0px;font-size:15px;line-height:20px;color:#333;font-weight:700;letter-spacing:-0.472px;">LadyOnChain</span>
<span class="t" style="left:1782.3px;top:408.0px;font-size:13.5px;line-height:18px;color:#555;letter-spacing:-0.356px;">Aug 11, 12:20 PM UTC</span>
<span class="t" style="left:1619.3px;top:432.0px;font-size:14px;line-height:18px;color:#3b5be8;font-weight:700;letter-spacing:-0.432px;">@Lady0nChain</span>
<span class="t" style="left:1719.3px;top:432.0px;font-size:14px;line-height:18px;color:#555;letter-spacing:-0.204px;">· Istanbul, Marmara Region, T…</span>
<span class="t" style="left:1555.3px;top:479.0px;font-size:14px;line-height:18px;color:#555;letter-spacing:-0.051px;">@nov3lolo @0G_labs @0G_labs' transparency with</span>
<span class="t" style="left:1555.3px;top:499.0px;font-size:14px;line-height:18px;color:#555;letter-spacing:0.171px;">unchangeable reporting and verifiable sources strengthens</span>
<div class="a" style="left:1578px;top:519.5px;width:38px;height:17px;background:#dedede"></div>
<div class="a" style="left:1620px;top:519.5px;width:12px;height:17px;background:#dedede"></div>
<div class="a" style="left:1636px;top:519.5px;width:67px;height:17px;background:#dedede"></div>
<div class="a" style="left:1873px;top:519.5px;width:24px;height:17px;background:#dedede"></div>
<div class="a" style="left:1555px;top:539.5px;width:97px;height:17px;background:#dedede"></div>
<span class="t" style="left:1555.3px;top:519.0px;font-size:14px;line-height:18px;color:#555;letter-spacing:0.670px;">the</span>
<span class="t" style="left:1579.3px;top:519.0px;font-size:14px;line-height:18px;color:#555;letter-spacing:0.200px;">future</span>
<span class="t" style="left:1621.3px;top:519.0px;font-size:14px;line-height:18px;color:#555;letter-spacing:0.124px;">of</span>
<span class="t" style="left:1637.3px;top:519.0px;font-size:14px;line-height:18px;color:#555;letter-spacing:0.223px;">journalism</span>
<span class="t" style="left:1704.3px;top:519.0px;font-size:14px;line-height:18px;color:#555;letter-spacing:0.131px;">. Thus, facts are protected</span>
<span class="t" style="left:1874.3px;top:519.0px;font-size:14px;line-height:18px;color:#555;letter-spacing:-0.278px;">and</span>
<span class="t" style="left:1555.3px;top:539.0px;font-size:14px;line-height:18px;color:#555;letter-spacing:0.444px;">misinformation</span>
<span class="t" style="left:1656.3px;top:539.0px;font-size:14px;line-height:18px;color:#555;letter-spacing:0.054px;">is prevented.</span>
<svg style="left:1555px;top:573px;overflow:hidden" width="388" height="360" viewBox="0 0 388 360" font-family="Liberation Sans,Arial,sans-serif">
<defs>
<linearGradient id="sky" x1="0" y1="0" x2="0" y2="1"><stop offset="0" stop-color="#233a64"/><stop offset="0.300" stop-color="#1a2a4e"/><stop offset="0.600" stop-color="#151d3a"/><stop offset="1" stop-color="#2a1f8a"/></linearGradient>
<radialGradient id="redL" cx="0.550" cy="0.450" r="0.750"><stop offset="0" stop-color="#bb332a"/><stop offset="0.550" stop-color="#a32a25"/><stop offset="1" stop-color="#701d1c"/></radialGradient>
<radialGradient id="redR" cx="0.450" cy="0.450" r="0.750"><stop offset="0" stop-color="#bb332a"/><stop offset="0.550" stop-color="#a32a25"/><stop offset="1" stop-color="#701d1c"/></radialGradient>
<radialGradient id="glowc" cx="0.500" cy="0.500" r="0.500"><stop offset="0" stop-color="#f9a0fa" stop-opacity="1"/><stop offset="0.550" stop-color="#d94ae6" stop-opacity="0.850"/><stop offset="1" stop-color="#9a2ad0" stop-opacity="0"/></radialGradient>
<linearGradient id="col" x1="0" y1="0" x2="1" y2="0"><stop offset="0" stop-color="#e24fe8"/><stop offset="0.250" stop-color="#a742e6"/><stop offset="0.500" stop-color="#6a3be0"/><stop offset="0.750" stop-color="#a742e6"/><stop offset="1" stop-color="#e24fe8"/></linearGradient>
<filter id="b2" x="-20%" y="-20%" width="140%" height="140%"><feGaussianBlur stdDeviation="2"/></filter>
<filter id="b4" x="-30%" y="-30%" width="160%" height="160%"><feGaussianBlur stdDeviation="4"/></filter>
<filter id="b8" x="-40%" y="-40%" width="180%" height="180%"><feGaussianBlur stdDeviation="9"/></filter>
<filter id="b1" x="-20%" y="-20%" width="140%" height="140%"><feGaussianBlur stdDeviation="0.600"/></filter>
</defs>
<rect width="388" height="360" fill="#14151e"/>
<rect x="18" y="17" width="360" height="270" fill="url(#sky)"/>
<g fill="#15223f" opacity="0.800"><rect x="60" y="17" width="30" height="40"/><rect x="100" y="20" width="34" height="50"/><rect x="140" y="30" width="24" height="40"/><rect x="236" y="24" width="30" height="40"/><rect x="276" y="17" width="40" height="40"/></g>
<g fill="#9cc4e6" opacity="0.550"><circle cx="125.4" cy="37.1" r="0.6"/><circle cx="110.5" cy="83.4" r="1.0"/><circle cx="302.9" cy="43.0" r="1.0"/><circle cx="144.6" cy="58.1" r="0.9"/><circle cx="83.2" cy="28.3" r="1.0"/><circle cx="138.8" cy="52.1" r="0.8"/><circle cx="242.4" cy="20.6" r="0.6"/><circle cx="177.8" cy="63.7" r="0.5"/><circle cx="218.0" cy="106.0" r="0.7"/><circle cx="207.0" cy="30.7" r="0.6"/><circle cx="239.7" cy="30.1" r="1.0"/><circle cx="305.4" cy="28.7" r="1.1"/><circle cx="161.0" cy="89.5" r="0.9"/><circle cx="139.8" cy="80.8" r="0.9"/><circle cx="277.6" cy="43.9" r="0.9"/><circle cx="319.6" cy="80.6" r="0.8"/><circle cx="90.6" cy="64.4" r="0.6"/><circle cx="253.9" cy="81.1" r="0.8"/><circle cx="109.1" cy="78.1" r="0.8"/><circle cx="108.4" cy="100.1" r="0.9"/><circle cx="93.2" cy="103.9" r="0.5"/><circle cx="149.5" cy="84.8" r="0.8"/><circle cx="209.8" cy="78.3" r="0.7"/><circle cx="144.4" cy="35.9" r="0.4"/><circle cx="253.3" cy="87.9" r="0.8"/><circle cx="259.7" cy="52.3" r="0.6"/><circle cx="163.5" cy="98.5" r="0.4"/><circle cx="196.3" cy="42.2" r="0.9"/><circle cx="155.6" cy="50.0" r="0.7"/><circle cx="206.2" cy="89.5" r="0.6"/><circle cx="288.7" cy="30.1" r="0.6"/><circle cx="86.9" cy="30.1" r="0.9"/><circle cx="256.4" cy="36.6" r="0.5"/><circle cx="172.5" cy="86.9" r="1.0"/><circle cx="262.1" cy="73.3" r="0.5"/><circle cx="167.6" cy="37.4" r="0.8"/><circle cx="213.5" cy="38.2" r="0.6"/><circle cx="271.0" cy="22.7" r="1.0"/><circle cx="300.6" cy="105.4" r="0.7"/><circle cx="209.2" cy="72.5" r="0.8"/><circle cx="323.8" cy="81.8" r="0.6"/><circle cx="292.2" cy="63.6" r="0.8"/><circle cx="256.2" cy="20.2" r="0.9"/><circle cx="238.7" cy="64.3" r="0.8"/><circle cx="184.3" cy="37.4" r="0.8"/><circle cx="70.0" cy="65.0" r="0.9"/><circle cx="179.9" cy="70.9" r="1.1"/><circle cx="300.9" cy="32.2" r="1.0"/><circle cx="228.3" cy="24.6" r="0.7"/><circle cx="123.0" cy="27.0" r="0.8"/><circle cx="311.1" cy="49.1" r="1.0"/><circle cx="247.6" cy="32.1" r="1.0"/><circle cx="222.3" cy="103.4" r="0.9"/><circle cx="259.7" cy="50.9" r="1.0"/><circle cx="311.6" cy="97.5" r="0.7"/><circle cx="264.3" cy="63.7" r="0.5"/><circle cx="71.5" cy="27.0" r="0.5"/><circle cx="103.4" cy="64.7" r="0.9"/><circle cx="205.1" cy="58.0" r="0.9"/><circle cx="142.3" cy="61.8" r="0.9"/><circle cx="168.4" cy="36.3" r="1.0"/><circle cx="254.3" cy="53.0" r="0.7"/><circle cx="202.9" cy="73.7" r="0.6"/><circle cx="60.7" cy="38.8" r="0.9"/><circle cx="98.7" cy="61.4" r="0.5"/><circle cx="116.5" cy="35.4" r="0.7"/><circle cx="105.4" cy="22.5" r="0.5"/><circle cx="105.4" cy="64.1" r="0.4"/><circle cx="66.1" cy="60.3" r="0.7"/><circle cx="249.9" cy="24.6" r="0.7"/></g>
<!-- city buildings -->
<g fill="#111830">
<polygon points="168,84 171,78 178,78 178,270 168,270"/><rect x="178" y="122" width="18" height="150"/><rect x="196" y="150" width="14" height="120"/>
<polygon points="213,86 216,82 231,82 233,270 213,270"/><rect x="168" y="172" width="66" height="100"/>
</g>
<g fill="#6fb8d8" opacity="0.800"><rect x="169.5" y="82.0" width="4" height="1.500"/><rect x="174.0" y="82.0" width="4" height="1.500"/><rect x="169.5" y="87.5" width="4" height="1.500"/><rect x="174.0" y="87.5" width="2" height="1.500"/><rect x="174.0" y="93.0" width="4" height="1.500"/><rect x="169.5" y="98.5" width="4" height="1.500"/><rect x="174.0" y="98.5" width="4" height="1.500"/><rect x="169.5" y="104.0" width="4" height="1.500"/><rect x="169.5" y="109.5" width="2" height="1.500"/><rect x="169.5" y="115.0" width="4" height="1.500"/><rect x="174.0" y="115.0" width="2" height="1.500"/><rect x="169.5" y="120.5" width="4" height="1.500"/><rect x="174.0" y="120.5" width="2" height="1.500"/><rect x="174.0" y="126.0" width="4" height="1.500"/><rect x="169.5" y="142.5" width="4" height="1.500"/><rect x="174.0" y="142.5" width="2" height="1.500"/><rect x="174.0" y="148.0" width="2" height="1.500"/><rect x="169.5" y="153.5" width="3" height="1.500"/><rect x="169.5" y="159.0" width="4" height="1.500"/><rect x="169.5" y="164.5" width="3" height="1.500"/><rect x="214.5" y="88.0" width="3" height="1.500"/><rect x="223.5" y="99.0" width="3" height="1.500"/><rect x="219.0" y="110.0" width="4" height="1.500"/><rect x="223.5" y="110.0" width="2" height="1.500"/><rect x="214.5" y="115.5" width="4" height="1.500"/><rect x="223.5" y="115.5" width="2" height="1.500"/><rect x="214.5" y="121.0" width="2" height="1.500"/><rect x="219.0" y="121.0" width="3" height="1.500"/><rect x="219.0" y="126.5" width="4" height="1.500"/><rect x="214.5" y="132.0" width="4" height="1.500"/><rect x="219.0" y="132.0" width="3" height="1.500"/><rect x="223.5" y="132.0" width="2" height="1.500"/><rect x="214.5" y="137.5" width="2" height="1.500"/><rect x="219.0" y="137.5" width="4" height="1.500"/><rect x="223.5" y="137.5" width="2" height="1.500"/><rect x="219.0" y="143.0" width="3" height="1.500"/><rect x="223.5" y="143.0" width="2" height="1.500"/><rect x="219.0" y="148.5" width="3" height="1.500"/><rect x="219.0" y="154.0" width="3" height="1.500"/><rect x="214.5" y="159.5" width="4" height="1.500"/><rect x="223.5" y="159.5" width="4" height="1.500"/><rect x="214.5" y="165.0" width="4" height="1.500"/><rect x="223.5" y="165.0" width="3" height="1.500"/><rect x="214.5" y="170.5" width="3" height="1.500"/><rect x="219.0" y="170.5" width="4" height="1.500"/><rect x="223.5" y="170.5" width="3" height="1.500"/><rect x="184.0" y="126.0" width="3" height="1.500"/><rect x="184.0" y="131.5" width="4" height="1.500"/><rect x="188.5" y="131.5" width="3" height="1.500"/><rect x="184.0" y="137.0" width="4" height="1.500"/><rect x="188.5" y="137.0" width="3" height="1.500"/><rect x="179.5" y="142.5" width="2" height="1.500"/><rect x="188.5" y="142.5" width="3" height="1.500"/><rect x="179.5" y="148.0" width="3" height="1.500"/><rect x="184.0" y="148.0" width="4" height="1.500"/><rect x="188.5" y="148.0" width="3" height="1.500"/><rect x="179.5" y="153.5" width="3" height="1.500"/><rect x="188.5" y="153.5" width="3" height="1.500"/><rect x="179.5" y="159.0" width="2" height="1.500"/><rect x="179.5" y="164.5" width="4" height="1.500"/><rect x="184.0" y="164.5" width="3" height="1.500"/><rect x="188.5" y="164.5" width="2" height="1.500"/><rect x="188.5" y="170.0" width="4" height="1.500"/><rect x="179.5" y="175.5" width="3" height="1.500"/><rect x="188.5" y="175.5" width="2" height="1.500"/><rect x="199.5" y="154.0" width="4" height="1.500"/><rect x="204.0" y="159.5" width="2" height="1.500"/><rect x="204.0" y="165.0" width="2" height="1.500"/><rect x="199.5" y="170.5" width="4" height="1.500"/><rect x="204.0" y="170.5" width="3" height="1.500"/><rect x="199.5" y="176.0" width="4" height="1.500"/><rect x="204.0" y="176.0" width="4" height="1.500"/><rect x="199.5" y="181.5" width="2" height="1.500"/><rect x="204.0" y="181.5" width="4" height="1.500"/><rect x="176.0" y="174.0" width="3" height="1.500"/><rect x="185.0" y="174.0" width="4" height="1.500"/><rect x="189.5" y="174.0" width="3" height="1.500"/><rect x="194.0" y="174.0" width="2" height="1.500"/><rect x="198.5" y="174.0" width="4" height="1.500"/><rect x="207.5" y="174.0" width="4" height="1.500"/><rect x="212.0" y="174.0" width="4" height="1.500"/><rect x="216.5" y="174.0" width="4" height="1.500"/><rect x="230.0" y="174.0" width="2" height="1.500"/><rect x="185.0" y="179.5" width="2" height="1.500"/><rect x="189.5" y="179.5" width="4" height="1.500"/><rect x="194.0" y="179.5" width="2" height="1.500"/><rect x="212.0" y="179.5" width="4" height="1.500"/><rect x="216.5" y="179.5" width="4" height="1.500"/><rect x="221.0" y="179.5" width="4" height="1.500"/><rect x="225.5" y="179.5" width="4" height="1.500"/><rect x="230.0" y="179.5" width="4" height="1.500"/><rect x="171.5" y="185.0" width="2" height="1.500"/><rect x="176.0" y="185.0" width="4" height="1.500"/><rect x="180.5" y="185.0" width="2" height="1.500"/><rect x="185.0" y="185.0" width="2" height="1.500"/><rect x="189.5" y="185.0" width="2" height="1.500"/><rect x="194.0" y="185.0" width="3" height="1.500"/><rect x="212.0" y="185.0" width="4" height="1.500"/><rect x="221.0" y="185.0" width="3" height="1.500"/><rect x="225.5" y="185.0" width="4" height="1.500"/><rect x="230.0" y="185.0" width="3" height="1.500"/><rect x="171.5" y="190.5" width="3" height="1.500"/><rect x="180.5" y="190.5" width="2" height="1.500"/><rect x="189.5" y="190.5" width="2" height="1.500"/><rect x="194.0" y="190.5" width="2" height="1.500"/><rect x="203.0" y="190.5" width="4" height="1.500"/><rect x="207.5" y="190.5" width="2" height="1.500"/><rect x="212.0" y="190.5" width="3" height="1.500"/><rect x="216.5" y="190.5" width="3" height="1.500"/><rect x="225.5" y="190.5" width="2" height="1.500"/><rect x="171.5" y="196.0" width="2" height="1.500"/><rect x="185.0" y="196.0" width="2" height="1.500"/><rect x="194.0" y="196.0" width="3" height="1.500"/><rect x="207.5" y="196.0" width="2" height="1.500"/><rect x="216.5" y="196.0" width="3" height="1.500"/><rect x="230.0" y="196.0" width="4" height="1.500"/><rect x="171.5" y="201.5" width="2" height="1.500"/><rect x="176.0" y="201.5" width="4" height="1.500"/><rect x="180.5" y="201.5" width="4" height="1.500"/><rect x="185.0" y="201.5" width="3" height="1.500"/><rect x="189.5" y="201.5" width="2" height="1.500"/><rect x="203.0" y="201.5" width="4" height="1.500"/><rect x="212.0" y="201.5" width="3" height="1.500"/><rect x="171.5" y="207.0" width="3" height="1.500"/><rect x="189.5" y="207.0" width="4" height="1.500"/><rect x="198.5" y="207.0" width="2" height="1.500"/><rect x="207.5" y="207.0" width="2" height="1.500"/><rect x="221.0" y="207.0" width="2" height="1.500"/><rect x="225.5" y="207.0" width="2" height="1.500"/><rect x="230.0" y="207.0" width="2" height="1.500"/><rect x="194.0" y="212.5" width="4" height="1.500"/><rect x="198.5" y="212.5" width="4" height="1.500"/><rect x="203.0" y="212.5" width="4" height="1.500"/><rect x="216.5" y="212.5" width="3" height="1.500"/><rect x="225.5" y="212.5" width="2" height="1.500"/><rect x="230.0" y="212.5" width="2" height="1.500"/><rect x="176.0" y="218.0" width="4" height="1.500"/><rect x="185.0" y="218.0" width="3" height="1.500"/><rect x="207.5" y="218.0" width="2" height="1.500"/><rect x="216.5" y="218.0" width="4" height="1.500"/><rect x="225.5" y="218.0" width="4" height="1.500"/><rect x="176.0" y="223.5" width="3" height="1.500"/><rect x="180.5" y="223.5" width="3" height="1.500"/><rect x="189.5" y="223.5" width="2" height="1.500"/><rect x="194.0" y="223.5" width="3" height="1.500"/><rect x="203.0" y="223.5" width="3" height="1.500"/><rect x="216.5" y="223.5" width="2" height="1.500"/><rect x="221.0" y="223.5" width="4" height="1.500"/><rect x="225.5" y="223.5" width="2" height="1.500"/><rect x="171.5" y="229.0" width="3" height="1.500"/><rect x="203.0" y="229.0" width="3" height="1.500"/><rect x="207.5" y="229.0" width="3" height="1.500"/><rect x="212.0" y="229.0" width="4" height="1.500"/><rect x="216.5" y="229.0" width="3" height="1.500"/><rect x="221.0" y="229.0" width="2" height="1.500"/><rect x="225.5" y="229.0" width="4" height="1.500"/><rect x="230.0" y="229.0" width="4" height="1.500"/><rect x="171.5" y="234.5" width="4" height="1.500"/><rect x="189.5" y="234.5" width="4" height="1.500"/><rect x="194.0" y="234.5" width="3" height="1.500"/><rect x="207.5" y="234.5" width="2" height="1.500"/><rect x="225.5" y="234.5" width="2" height="1.500"/></g>
<!-- purple back glow between panels -->
<rect x="160" y="160" width="80" height="120" fill="#4a30cf" opacity="0.800" filter="url(#b4)"/>
<!-- red panels -->
<polygon points="18,20 170,50 168,282 18,305" fill="url(#redL)"/>
<polygon points="232,56 378,18 378,305 234,282" fill="url(#redR)"/>
<rect x="0" y="17" width="18" height="343" fill="#1c161b"/>
<rect x="378" y="17" width="10" height="343" fill="#2c171a"/>
<rect x="10" y="17" width="8" height="290" fill="#5b1b1b"/>
<polygon points="168,50 173,52 171,282 167,282" fill="#6e1a1b"/>
<polygon points="232,56 236,55 238,282 234,282" fill="#6e1a1b"/>
<!-- panel top shading -->
<linearGradient id="shade" x1="0" y1="0" x2="0" y2="1"><stop offset="0" stop-color="#3a0c10" stop-opacity="0.600"/><stop offset="0.280" stop-color="#3a0c10" stop-opacity="0.150"/><stop offset="0.450" stop-color="#3a0c10" stop-opacity="0"/><stop offset="0.800" stop-color="#3a0c10" stop-opacity="0"/><stop offset="1" stop-color="#2a080c" stop-opacity="0.450"/></linearGradient>
<polygon points="18,20 170,50 168,282 18,305" fill="url(#shade)"/>
<polygon points="232,56 378,18 378,305 234,282" fill="url(#shade)"/>
<!-- network nodes -->
<g stroke="#b4d0ea" stroke-width="0.600" opacity="0.600" fill="none"><path d="M131 41 L212 54 L252 66 M131 41 L163 71 L212 54 L269 46 M163 71 L127 66 M198 80 L163 71 M212 54 L198 80 L197 98 M205 30 L241 36 L269 46 M173 33 L186 42 L212 54 M241 36 L252 66 M265 21 L241 36 M205 30 L186 42 M203 121 L236 128"/>
<circle cx="131.500" cy="41" r="9"/><circle cx="212" cy="54" r="9.500"/><circle cx="163" cy="71" r="7.500"/><circle cx="252" cy="66" r="8.500"/><circle cx="203" cy="121" r="5.500"/><circle cx="269.500" cy="45.500" r="4.500"/><circle cx="198" cy="80" r="4"/></g>
<g fill="#cfe0f2" opacity="0.780">
<path d="M127 37 Q131.500 28 136 37 L137 46 L126 46Z"/><path d="M207 49 Q212 39 217 49 L218 60 L206 60Z"/>
<circle cx="163" cy="67" r="2.600"/><path d="M159 70 H167 V73 H164.500 V77 H161.500 V73 H159Z"/>
<circle cx="252" cy="61.500" r="2.400"/><path d="M249 64 H255 L256 72 H253 V75 H251 V72 H248Z"/>
<circle cx="269.500" cy="45.500" r="2.500"/><circle cx="198" cy="80" r="2.400"/><circle cx="197" cy="98.500" r="2.400"/><circle cx="241" cy="36" r="2.600"/><circle cx="205" cy="30" r="2"/><circle cx="173" cy="33.500" r="2"/><circle cx="186" cy="42" r="2.200"/><circle cx="265" cy="21" r="1.800"/><circle cx="203" cy="121" r="2.600"/><circle cx="236" cy="128" r="1.600"/>
<path d="M124 64 L128.500 66.500 L124 69Z"/>
</g>
<!-- cracks -->
<g stroke="#330a10" stroke-width="1.150" fill="none" opacity="0.900">
<path d="M100.0 196.0 L121.8 204.1 L138.1 220.8 M138.1 220.8 L169.1 219.7 M138.1 220.8 L149.2 241.3 L165.0 258.4 M100.0 196.0 L113.7 197.3 L126.1 203.5 M126.1 203.5 L133.0 220.5 M126.1 203.5 L137.9 210.6 L151.7 211.3 M100.0 196.0 L106.1 210.6 L108.2 226.2 M108.2 226.2 L125.2 238.7 M108.2 226.2 L116.6 239.6 L123.4 253.8 M100.0 196.0 L97.1 209.1 L100.7 222.0 M100.7 222.0 L117.1 229.1 M100.7 222.0 L108.4 233.0 L119.2 240.8 M100.0 196.0 L93.0 208.7 L84.4 220.3 M84.4 220.3 L89.0 239.1 M84.4 220.3 L73.8 230.2 L59.9 234.2 M100.0 196.0 L89.2 208.0 L83.0 222.8 M83.0 222.8 L87.5 243.8 M83.0 222.8 L79.4 238.5 L71.0 252.3 M100.0 196.0 L79.5 200.1 L62.6 212.5 M62.6 212.5 L35.2 207.1 M62.6 212.5 L45.9 225.2 L31.9 240.7 M100.0 196.0 L79.6 205.9 L56.9 205.4 M56.9 205.4 L37.1 228.3 M56.9 205.4 L34.3 208.1 L12.2 213.0 M100.0 196.0 L83.0 189.8 L69.1 178.3 M69.1 178.3 L60.6 155.8 M69.1 178.3 L52.3 171.7 L40.1 158.5 M100.0 196.0 L90.9 174.3 L92.0 150.8 M92.0 150.8 L113.5 127.9 M92.0 150.8 L102.1 129.5 L106.5 106.4 M100.0 196.0 L100.8 175.2 L98.8 154.4 M98.8 154.4 L110.1 129.1 M98.8 154.4 L106.0 134.9 L104.8 114.1 M100.0 196.0 L111.3 178.1 L119.6 158.6 M119.6 158.6 L113.4 131.1 M119.6 158.6 L124.2 137.9 L122.0 116.9 M100.0 196.0 L108.3 185.1 L120.8 179.5 M120.8 179.5 L127.2 162.5 M120.8 179.5 L129.9 169.3 L139.9 160.1 M100.0 196.0 L111.8 196.0 L123.4 194.3 M123.4 194.3 L136.9 202.2 M123.4 194.3 L134.9 191.6 L144.0 184.2 "/><path d="M290.0 196.0 L306.1 189.6 L323.4 189.3 M323.4 189.3 L341.8 175.4 M323.4 189.3 L340.7 188.5 L358.0 189.4 M290.0 196.0 L312.3 210.2 L330.9 229.1 M330.9 229.1 L366.2 229.5 M330.9 229.1 L350.3 247.0 L365.3 268.9 M290.0 196.0 L304.3 201.0 L318.5 206.1 M318.5 206.1 L336.5 197.0 M318.5 206.1 L333.2 209.5 L346.7 216.4 M290.0 196.0 L293.9 211.5 L294.3 227.5 M294.3 227.5 L278.6 241.8 M294.3 227.5 L290.4 243.0 L280.6 255.6 M290.0 196.0 L294.7 212.1 L296.0 228.9 M296.0 228.9 L313.9 242.3 M296.0 228.9 L304.3 243.5 L314.4 256.9 M290.0 196.0 L283.5 205.6 L273.7 211.9 M273.7 211.9 L271.9 227.3 M273.7 211.9 L268.1 222.1 L260.0 230.5 M290.0 196.0 L272.0 213.5 L248.6 222.7 M248.6 222.7 L233.3 252.4 M248.6 222.7 L232.3 241.7 L224.9 265.7 M290.0 196.0 L263.9 198.1 L238.1 202.9 M238.1 202.9 L218.2 231.6 M238.1 202.9 L215.6 216.3 L189.5 218.9 M290.0 196.0 L278.7 192.2 L268.3 186.3 M268.3 186.3 L253.1 190.8 M268.3 186.3 L259.6 178.2 L251.5 169.5 M290.0 196.0 L268.6 182.4 L254.3 161.4 M254.3 161.4 L221.4 153.7 M254.3 161.4 L232.3 148.9 L208.7 139.4 M290.0 196.0 L292.9 175.4 L287.2 155.3 M287.2 155.3 L294.5 128.5 M287.2 155.3 L289.4 134.6 L288.8 113.7 M290.0 196.0 L297.3 183.5 L307.4 173.1 M307.4 173.1 L326.7 173.5 M307.4 173.1 L315.6 161.2 L322.9 148.7 M290.0 196.0 L296.4 178.7 L295.4 160.2 M295.4 160.2 L306.8 138.5 M295.4 160.2 L299.5 142.3 L295.0 124.4 M290.0 196.0 L313.2 188.5 L337.4 186.1 M337.4 186.1 L359.4 162.1 M337.4 186.1 L358.4 173.6 L381.0 164.4 "/>
</g>
<g stroke="#25080e" stroke-width="1.300" fill="#7c2020" opacity="0.920"><path d="M139.8 191.2 L137.5 193.1 L134.5 192.1 L134.4 189.1 L137.0 188.2Z M81.8 211.4 L78.4 215.5 L72.4 215.1 L71.2 208.8 L77.3 207.1Z M78.8 194.9 L77.3 197.9 L71.8 196.7 L72.0 192.9 L76.9 192.5Z M131.9 186.8 L127.1 189.2 L121.9 187.7 L122.3 182.9 L128.1 181.9Z M69.7 198.6 L67.3 200.9 L62.0 199.5 L62.5 196.3 L66.5 194.9Z M122.2 220.0 L118.9 223.3 L115.5 222.1 L115.8 218.3 L119.2 217.3Z M67.1 196.8 L63.5 199.9 L59.0 197.9 L57.8 193.4 L63.1 192.2Z M111.3 192.7 L109.2 196.9 L103.3 195.0 L102.6 191.3 L107.2 189.9Z M136.4 210.7 L134.9 213.8 L131.3 213.2 L131.2 210.0 L133.4 209.3Z M108.2 202.6 L106.5 205.0 L101.8 204.1 L101.4 199.8 L106.2 199.2Z M123.8 182.4 L121.5 184.9 L116.0 183.5 L115.5 179.7 L120.4 178.7Z M127.7 219.1 L126.2 222.1 L121.4 221.6 L120.4 217.9 L124.1 216.4Z M66.2 195.8 L62.9 200.6 L55.8 199.1 L56.7 193.3 L61.4 192.1Z M97.0 196.7 L94.6 199.4 L91.9 199.1 L91.2 196.1 L94.8 194.9Z M93.3 216.9 L90.6 218.8 L86.9 217.7 L86.4 214.5 L90.9 213.2Z M131.8 211.8 L128.9 213.8 L123.8 213.1 L123.9 208.7 L127.9 207.7Z M118.6 180.8 L116.7 183.1 L113.0 182.9 L112.9 179.6 L117.2 178.5Z M105.1 189.1 L101.4 192.6 L97.3 192.1 L96.1 186.3 L102.1 186.0Z M102.5 194.1 L99.4 197.1 L93.7 195.3 L93.3 191.0 L98.9 190.1Z M118.1 172.4 L114.7 177.0 L108.4 175.4 L109.2 170.3 L115.2 168.7Z M78.8 219.3 L77.3 222.7 L72.1 221.4 L72.2 218.6 L75.8 217.4Z M95.7 184.8 L91.7 188.3 L88.3 186.9 L88.0 182.9 L93.5 181.2Z M100.2 185.0 L97.6 189.2 L90.7 187.4 L90.5 182.6 L96.0 180.2Z M80.8 209.8 L75.6 214.0 L70.0 212.3 L71.1 206.3 L75.8 205.5Z M82.4 208.1 L78.8 214.1 L71.1 212.0 L72.6 207.8 L79.6 205.2Z M76.6 182.9 L72.3 185.9 L66.2 184.6 L66.1 178.7 L71.5 177.8Z M91.3 201.4 L87.0 205.1 L83.8 204.4 L83.5 199.5 L88.6 198.5Z M95.9 186.3 L94.3 190.1 L89.5 188.6 L89.5 185.4 L93.5 184.4Z M110.4 192.4 L108.6 194.6 L104.1 193.4 L104.0 190.7 L107.7 189.7Z M116.3 189.7 L111.9 192.8 L106.9 192.3 L107.7 186.7 L113.2 185.8Z M109.8 192.7 L105.7 196.4 L100.8 195.3 L100.6 190.3 L105.6 188.7Z M114.9 195.8 L112.0 199.7 L105.2 199.5 L105.0 194.0 L112.2 192.5Z M79.8 203.8 L77.0 208.9 L69.1 208.0 L69.2 201.5 L74.8 200.8Z M92.3 188.8 L87.5 191.9 L82.1 189.4 L83.0 184.7 L89.5 184.1Z M104.7 170.8 L102.6 173.3 L98.3 171.6 L97.6 168.6 L102.8 167.4Z M113.1 196.0 L110.4 198.7 L107.3 197.8 L107.6 195.0 L111.5 193.8Z M97.5 217.6 L96.0 219.2 L91.7 218.9 L91.2 215.6 L94.7 214.2Z M105.7 217.2 L104.0 219.4 L98.0 218.7 L98.9 215.3 L102.9 213.9Z M87.9 218.3 L85.2 220.7 L79.1 219.8 L80.0 214.6 L84.7 213.4Z M145.0 195.1 L141.4 198.9 L135.9 196.9 L134.4 191.9 L141.6 191.6Z M119.7 202.3 L116.9 207.0 L111.0 205.6 L109.6 199.9 L116.5 199.0Z M115.9 191.3 L113.0 195.0 L108.4 193.4 L108.5 189.9 L113.1 189.0Z M117.8 209.6 L116.2 212.4 L112.2 212.0 L112.0 208.2 L116.2 207.8Z M66.3 197.4 L63.9 199.2 L60.2 198.8 L60.0 195.2 L63.6 194.3Z "/><path d="M294.9 203.8 L292.6 208.0 L287.1 206.2 L287.1 202.5 L291.5 201.3Z M306.1 204.6 L301.5 207.7 L296.2 206.2 L296.4 200.2 L303.3 199.1Z M271.7 185.5 L269.9 189.1 L263.2 187.6 L263.4 182.7 L268.8 182.4Z M307.7 184.6 L305.8 187.7 L299.6 187.4 L299.5 182.4 L304.1 181.5Z M278.5 200.0 L275.8 204.8 L268.4 203.4 L268.5 197.7 L274.5 196.1Z M300.2 201.6 L298.4 204.0 L294.0 203.2 L293.1 199.3 L298.4 198.9Z M289.4 171.8 L287.0 173.3 L283.5 172.4 L284.3 169.8 L286.6 168.7Z M308.3 206.7 L306.0 212.0 L297.2 211.2 L297.3 206.1 L305.6 203.5Z M295.2 203.7 L293.8 205.4 L289.6 205.2 L290.3 202.4 L293.0 201.1Z M261.1 212.8 L259.4 216.2 L253.6 214.4 L253.8 210.8 L256.7 209.4Z M294.2 206.5 L292.8 210.1 L287.6 208.1 L287.6 204.8 L292.0 204.5Z M292.5 182.6 L289.7 184.7 L286.8 183.4 L287.1 180.3 L290.7 179.5Z M277.2 181.9 L275.7 184.1 L269.9 182.6 L270.0 178.7 L273.7 178.5Z M289.5 193.2 L286.8 195.9 L283.6 195.4 L283.9 192.1 L287.7 190.3Z M307.6 177.8 L304.9 181.1 L297.8 178.5 L298.2 174.1 L303.7 172.3Z M320.0 202.1 L318.1 205.1 L311.7 204.0 L311.4 199.2 L317.7 198.3Z M277.1 193.7 L273.7 198.7 L268.3 197.7 L267.7 191.1 L273.3 190.3Z M313.4 179.9 L311.8 182.9 L307.8 181.5 L307.4 178.3 L310.6 177.8Z M277.0 198.9 L275.4 201.7 L268.7 200.7 L269.2 196.2 L272.7 194.8Z M305.5 187.9 L301.8 191.7 L296.6 189.2 L296.2 184.3 L301.3 183.9Z M300.4 180.3 L298.1 183.0 L293.3 182.4 L292.3 177.1 L296.6 176.7Z M276.3 210.1 L273.9 214.1 L269.5 212.6 L268.8 209.2 L272.3 207.7Z M327.8 191.7 L325.4 194.6 L318.2 192.9 L319.2 187.4 L325.4 186.2Z M278.4 182.3 L275.7 185.6 L269.2 183.8 L269.9 178.5 L274.1 177.3Z M283.2 214.7 L279.9 219.7 L273.1 218.0 L271.8 212.8 L279.2 210.5Z M282.0 188.5 L279.6 194.2 L270.7 191.3 L271.8 187.1 L276.4 184.9Z M302.1 222.9 L299.4 227.9 L291.2 227.3 L292.7 220.7 L298.3 220.1Z M291.5 213.9 L289.8 216.9 L286.0 215.6 L285.2 212.5 L289.5 212.1Z M274.0 175.9 L269.9 180.1 L263.8 178.5 L263.4 172.3 L270.0 171.3Z M311.4 220.1 L308.2 222.5 L304.7 221.7 L304.1 217.4 L307.6 217.2Z M302.0 203.8 L298.4 208.6 L291.7 207.8 L292.9 200.9 L298.7 200.7Z M312.9 193.1 L310.6 197.1 L302.3 196.0 L303.4 189.4 L309.3 188.5Z M285.6 189.9 L280.8 194.7 L276.0 192.3 L276.6 186.9 L282.8 186.3Z M286.0 180.0 L284.3 183.9 L277.9 182.5 L278.1 178.6 L282.1 176.7Z M302.2 173.8 L298.2 176.5 L294.3 174.4 L293.5 170.0 L297.3 169.0Z M315.2 202.0 L312.5 204.0 L309.3 203.1 L309.2 200.3 L312.5 199.0Z M294.8 173.8 L291.9 176.1 L288.3 175.8 L288.4 170.8 L291.5 170.5Z M272.7 208.9 L269.9 212.7 L263.9 211.7 L262.4 205.1 L267.6 204.5Z M327.2 211.9 L324.2 215.0 L320.6 214.0 L320.6 210.9 L324.7 210.0Z M302.5 207.9 L299.8 210.8 L292.4 208.4 L292.1 203.3 L297.7 202.6Z M325.1 201.0 L323.2 204.3 L318.3 203.4 L318.6 199.5 L321.9 199.0Z M331.7 189.6 L327.5 194.6 L322.6 192.4 L322.3 188.8 L327.3 186.8Z M270.7 193.8 L267.5 195.7 L263.9 195.5 L263.1 191.0 L267.1 190.1Z M284.7 207.9 L282.0 212.8 L276.2 211.9 L275.2 205.6 L281.9 205.2Z "/></g>
<!-- pink light on panels near glow -->
<ellipse cx="118" cy="204" rx="56" ry="30" fill="#d040e8" opacity="0.400" filter="url(#b8)"/>
<ellipse cx="272" cy="204" rx="56" ry="30" fill="#d040e8" opacity="0.400" filter="url(#b8)"/>
<!-- hanging cables -->
<g stroke="#121018" stroke-width="1.700" fill="none">
<path d="M22 0 C20 40 50 62 58 20 M8 0 C0 60 40 80 46 30 M0 74 C20 64 30 40 28 17 M0 130 C14 120 22 100 20 60"/>
<path d="M330 0 C330 50 370 70 384 40 M350 0 C352 30 372 44 388 30 M322 10 C330 80 380 90 388 70 M336 30 C340 110 380 120 388 100"/>
</g>
<g stroke="#262833" fill="none" stroke-linecap="round"><circle cx="14" cy="200" r="21" stroke-width="9"/><path d="M2 226 C14 246 30 268 50 292" stroke-width="11"/><path d="M0 262 C16 276 26 292 40 300" stroke-width="4"/>
<circle cx="384" cy="222" r="21" stroke-width="9"/><path d="M384 234 C372 250 354 266 340 284" stroke-width="10"/><path d="M388 276 C372 282 362 292 352 300" stroke-width="4"/></g>
<g stroke="#3a3d4c" fill="none" stroke-linecap="round" opacity="0.700"><path d="M-3 196 A17 17 0 0 1 28 190" stroke-width="2"/><path d="M6 228 C18 248 32 266 52 288" stroke-width="2"/><path d="M372 206 A17 17 0 0 0 366 230" stroke-width="2"/></g>
<!-- purple glow -->
<g filter="url(#b4)">
<path d="M86 174 C110 166 150 178 170 188 L193 222 L216 188 C236 178 276 166 302 174 L304 202 C282 208 264 218 245 240 L245 312 L143 312 L143 240 C124 218 106 208 84 202Z" fill="#a83cf0"/><path d="M164 182 L193 252 L222 182Z" fill="#4f33d6"/>
</g>
<g fill="#2b1f96" opacity="0.900"><rect x="172" y="176" width="14" height="70"/><rect x="188" y="170" width="12" height="80"/><rect x="202" y="180" width="14" height="66"/></g><g fill="#8d7cf6" opacity="0.850"><rect x="173.5" y="184.0" width="2.500" height="1.500"/><rect x="177.5" y="184.0" width="2.500" height="1.500"/><rect x="181.5" y="184.0" width="2.500" height="1.500"/><rect x="173.5" y="189.0" width="2.500" height="1.500"/><rect x="181.5" y="189.0" width="2.500" height="1.500"/><rect x="177.5" y="194.0" width="2.500" height="1.500"/><rect x="177.5" y="199.0" width="2.500" height="1.500"/><rect x="181.5" y="199.0" width="2.500" height="1.500"/><rect x="177.5" y="204.0" width="2.500" height="1.500"/><rect x="173.5" y="209.0" width="2.500" height="1.500"/><rect x="177.5" y="209.0" width="2.500" height="1.500"/><rect x="177.5" y="214.0" width="2.500" height="1.500"/><rect x="181.5" y="214.0" width="2.500" height="1.500"/><rect x="173.5" y="219.0" width="2.500" height="1.500"/><rect x="173.5" y="224.0" width="2.500" height="1.500"/><rect x="177.5" y="224.0" width="2.500" height="1.500"/><rect x="181.5" y="224.0" width="2.500" height="1.500"/><rect x="189.5" y="173.0" width="2.500" height="1.500"/><rect x="197.5" y="173.0" width="2.500" height="1.500"/><rect x="189.5" y="178.0" width="2.500" height="1.500"/><rect x="193.5" y="178.0" width="2.500" height="1.500"/><rect x="197.5" y="178.0" width="2.500" height="1.500"/><rect x="193.5" y="183.0" width="2.500" height="1.500"/><rect x="189.5" y="188.0" width="2.500" height="1.500"/><rect x="193.5" y="188.0" width="2.500" height="1.500"/><rect x="197.5" y="188.0" width="2.500" height="1.500"/><rect x="189.5" y="193.0" width="2.500" height="1.500"/><rect x="189.5" y="198.0" width="2.500" height="1.500"/><rect x="197.5" y="198.0" width="2.500" height="1.500"/><rect x="189.5" y="203.0" width="2.500" height="1.500"/><rect x="189.5" y="208.0" width="2.500" height="1.500"/><rect x="197.5" y="208.0" width="2.500" height="1.500"/><rect x="189.5" y="213.0" width="2.500" height="1.500"/><rect x="197.5" y="213.0" width="2.500" height="1.500"/><rect x="189.5" y="218.0" width="2.500" height="1.500"/><rect x="193.5" y="218.0" width="2.500" height="1.500"/><rect x="197.5" y="218.0" width="2.500" height="1.500"/><rect x="189.5" y="223.0" width="2.500" height="1.500"/><rect x="193.5" y="223.0" width="2.500" height="1.500"/><rect x="189.5" y="228.0" width="2.500" height="1.500"/><rect x="193.5" y="228.0" width="2.500" height="1.500"/><rect x="203.5" y="183.0" width="2.500" height="1.500"/><rect x="207.5" y="183.0" width="2.500" height="1.500"/><rect x="203.5" y="188.0" width="2.500" height="1.500"/><rect x="207.5" y="188.0" width="2.500" height="1.500"/><rect x="207.5" y="193.0" width="2.500" height="1.500"/><rect x="211.5" y="193.0" width="2.500" height="1.500"/><rect x="211.5" y="198.0" width="2.500" height="1.500"/><rect x="203.5" y="208.0" width="2.500" height="1.500"/><rect x="207.5" y="208.0" width="2.500" height="1.500"/><rect x="211.5" y="208.0" width="2.500" height="1.500"/><rect x="207.5" y="213.0" width="2.500" height="1.500"/><rect x="203.5" y="218.0" width="2.500" height="1.500"/><rect x="211.5" y="218.0" width="2.500" height="1.500"/><rect x="203.5" y="223.0" width="2.500" height="1.500"/><rect x="207.5" y="223.0" width="2.500" height="1.500"/></g>
<g filter="url(#b2)">
<path d="M92 179 C114 173 148 184 168 196 L193 238 L218 196 C238 184 272 173 296 179 L296 198 C276 204 258 214 240 236 L240 308 L148 308 L148 236 C130 214 112 204 92 198Z" fill="#d85af4"/>
<rect x="174" y="244" width="40" height="64" fill="#8a46e8" opacity="0.800"/>
<path d="M100 184 C120 180 146 190 164 202 L180 228 L170 236 C150 212 122 198 100 192Z" fill="#f3b4fb" opacity="0.900"/>
<path d="M288 184 C268 180 242 190 224 202 L208 228 L218 236 C238 212 266 198 288 192Z" fill="#f3b4fb" opacity="0.900"/>
</g>
<g filter="url(#b1)" stroke="#fdf0ff" stroke-width="1.200" fill="none" opacity="0.950">
<path d="M93.4 178.0 L110.1 180.4 L129.5 180.8 L147.2 186.0 L160.4 193.5 L161.8 206.7 L167.9 232.3 L167.6 269.9 L165.3 305.4 M91.7 180.6 L111.1 182.5 L131.3 184.5 L146.0 190.9 L162.3 198.1 L163.8 210.7 L168.8 235.6 L168.9 268.7 L169.6 307.2 M91.2 183.2 L113.9 184.1 L132.2 189.3 L149.7 192.4 L160.1 201.9 L170.0 215.0 L173.0 241.2 L173.6 269.7 L173.7 306.5 M99.2 185.8 L110.7 187.5 L132.1 192.0 L148.5 198.5 L160.9 205.1 L169.7 221.1 L177.1 243.1 L178.2 270.7 L180.2 306.6 M93.3 188.4 L111.9 188.4 L132.2 192.6 L148.5 201.4 L162.7 208.0 L172.2 225.4 L181.1 248.5 L185.4 269.8 L186.8 306.7 M92.7 191.0 L111.5 190.7 L131.1 198.4 L147.4 204.2 L160.9 211.7 L176.4 227.7 L182.2 250.0 L188.8 270.3 L188.6 305.2 M99.6 193.6 L110.9 194.8 L131.3 200.8 L149.7 208.3 L163.1 215.9 L177.0 231.3 L188.7 253.4 L190.7 271.4 L194.8 307.2 M89.9 196.2 L111.9 196.4 L133.1 203.3 L150.2 211.6 L165.0 220.1 L181.2 236.5 L189.2 259.2 L197.3 270.9 L200.2 306.1 M94.1 198.8 L112.9 198.5 L131.4 206.0 L148.3 214.4 L164.9 224.2 L183.9 241.1 L193.0 261.4 L203.3 269.5 L206.5 304.8 "/>
<g transform="translate(388,0) scale(-1,1)"><path d="M93.4 178.0 L110.1 180.4 L129.5 180.8 L147.2 186.0 L160.4 193.5 L161.8 206.7 L167.9 232.3 L167.6 269.9 L165.3 305.4 M91.7 180.6 L111.1 182.5 L131.3 184.5 L146.0 190.9 L162.3 198.1 L163.8 210.7 L168.8 235.6 L168.9 268.7 L169.6 307.2 M91.2 183.2 L113.9 184.1 L132.2 189.3 L149.7 192.4 L160.1 201.9 L170.0 215.0 L173.0 241.2 L173.6 269.7 L173.7 306.5 M99.2 185.8 L110.7 187.5 L132.1 192.0 L148.5 198.5 L160.9 205.1 L169.7 221.1 L177.1 243.1 L178.2 270.7 L180.2 306.6 M93.3 188.4 L111.9 188.4 L132.2 192.6 L148.5 201.4 L162.7 208.0 L172.2 225.4 L181.1 248.5 L185.4 269.8 L186.8 306.7 M92.7 191.0 L111.5 190.7 L131.1 198.4 L147.4 204.2 L160.9 211.7 L176.4 227.7 L182.2 250.0 L188.8 270.3 L188.6 305.2 M99.6 193.6 L110.9 194.8 L131.3 200.8 L149.7 208.3 L163.1 215.9 L177.0 231.3 L188.7 253.4 L190.7 271.4 L194.8 307.2 M89.9 196.2 L111.9 196.4 L133.1 203.3 L150.2 211.6 L165.0 220.1 L181.2 236.5 L189.2 259.2 L197.3 270.9 L200.2 306.1 M94.1 198.8 L112.9 198.5 L131.4 206.0 L148.3 214.4 L164.9 224.2 L183.9 241.1 L193.0 261.4 L203.3 269.5 L206.5 304.8 "/></g>
<path d="M147 228 V309 M151 242 V307 M156 229 V309 M160 206 V308 M165 219 V313 M170 203 V305 M176 246 V311 M182 248 V315 M204 243 V303 M210 242 V301 M216 239 V300 M221 214 V307 M226 225 V308 M231 219 V308 M236 234 V307 M241 222 V316 " stroke-width="1" stroke-dasharray="9 2 4 2 2 2"/>
</g>
<!-- console -->
<polygon points="0,296 40,288 108,268 150,260 238,260 282,268 350,288 388,296 388,360 0,360" fill="#222535"/>
<polygon points="108,268 150,260 238,260 282,268 262,300 128,300" fill="#2c3046"/>
<rect x="150" y="261" width="92" height="28" fill="#9a98ea" opacity="0.850"/>
<rect x="146" y="236" width="96" height="74" fill="#dc5cf0" opacity="0.600" filter="url(#b2)"/>
<ellipse cx="193" cy="309" rx="56" ry="13" fill="#24263c"/>
<ellipse cx="193" cy="308" rx="52" ry="11" fill="url(#glowc)"/>
<g filter="url(#b1)" stroke="#fdf0ff" stroke-width="1" fill="none" opacity="0.800"><path d="M156 262 V306 M166 262 V310 M176 262 V312 M210 262 V312 M220 262 V310 M230 262 V306" stroke-dasharray="6 2 2 2"/></g>
<!-- monitors -->
<g fill="#2b3044">
<polygon points="52,250 106,244 108,300 56,306"/><polygon points="282,244 332,250 328,304 284,298"/>
<polygon points="110,276 146,272 148,302 114,306"/><polygon points="244,272 278,276 274,304 242,300"/>
<polygon points="30,286 54,276 54,342 34,350"/><polygon points="328,276 350,288 348,344 330,338"/>
<polygon points="56,312 108,296 124,316 72,336"/><polygon points="270,316 284,298 334,312 320,334"/>
<polygon points="112,318 140,312 152,326 124,336"/><polygon points="238,318 270,320 264,336 232,330"/>
</g>
<g fill="#6ab2c6">
<polygon points="61.1,257.6 100.2,253.2 101.1,292.4 63.7,296.8"/><polygon points="288.6,253.1 324.3,257.5 321.7,294.9 290.4,290.5"/>
<polygon points="116.0,281.2 141.2,278.6 142.1,296.8 118.6,299.4"/><polygon points="248.7,278.5 273.0,281.1 270.4,298.5 246.9,295.9"/>
<polygon points="36.1,293.0 50.0,286.9 50.0,333.0 37.8,339.1"/><polygon points="332.0,286.7 345.1,293.6 344.2,334.5 333.7,330.2"/>
<polygon points="76.3,310.3 102.4,302.5 107.7,313.8 81.6,322.5"/><polygon points="282.5,305.3 308.6,311.4 302.5,323.6 277.3,315.7"/>
<polygon points="119.8,323.3 137.2,318.9 143.2,326.8 125.8,332.0"/><polygon points="247.0,320.8 266.2,323.4 261.0,332.1 241.8,328.6"/>
<polygon points="45.6,346.7 59.5,341.5 68.2,358.9 50.8,358.9"/><polygon points="353.1,341.5 365.3,346.7 370.5,358.9 353.1,358.9"/>
</g>
<g fill="#3f8aa8" opacity="0.700"><ellipse cx="78" cy="270" rx="8" ry="11"/><path d="M66 296 Q78 276 92 294Z"/><ellipse cx="306" cy="270" rx="7" ry="11"/><path d="M294 294 Q306 276 318 296Z"/><ellipse cx="43" cy="312" rx="4" ry="9"/><ellipse cx="339" cy="310" rx="4" ry="9"/><ellipse cx="129" cy="288" rx="4" ry="6"/><ellipse cx="260" cy="288" rx="4" ry="6"/><ellipse cx="293" cy="315" rx="5" ry="5"/>
<rect x="62" y="258" width="8" height="2"/><rect x="90" y="256" width="10" height="2"/><rect x="290" y="256" width="8" height="2"/><rect x="312" y="260" width="10" height="2"/><rect x="84" y="310" width="14" height="3"/></g>
<!-- figure -->
<path d="M159 360 L172 304 Q176 284 186 280 L198 280 Q206 282 209 290 L213 272 L206 266 L210 260 L219 266 L221 276 L216 304 L210 322 L213 360Z" fill="#6c5c6a"/>
<path d="M176 300 L206 300 L210 360 L170 360Z" fill="#7c6a78"/>
<path d="M186 281 L198 281 L200 360 L186 360Z" fill="#5c4c5a" opacity="0.600"/>
<rect x="174" y="322" width="34" height="2.500" fill="#5a4654"/>
<path d="M176 268 Q176 256 188 256 Q200 256 200 268 L199 280 Q188 284 177 280Z" fill="#2b2231"/>
<!-- texts -->
<g fill="#efc4bc" opacity="0.940" font-weight="700" style="filter:drop-shadow(0 0 2px #ff5a4a)">
<text x="21" y="147" font-size="18" textLength="20" lengthAdjust="spacingAndGlyphs">++</text>
<text x="45" y="154" font-size="37.700" textLength="109" lengthAdjust="spacingAndGlyphs">CENSORSHIP</text>
<text x="248" y="149" font-size="18" textLength="22" lengthAdjust="spacingAndGlyphs">++</text>
<text x="275" y="155" font-size="35" textLength="48" lengthAdjust="spacingAndGlyphs">BIAS</text>
<text x="332" y="149" font-size="18" textLength="26" lengthAdjust="spacingAndGlyphs">++</text>
</g>
</svg>
<div class="a" style="left:24px;top:918px;width:1951px;height:46px;background:#e3e3e3"></div>
</div></div>
<div class="a" style="left:1904.500px;top:897px;width:52px;height:52px;border-radius:50%;background:#2d4fd6;box-shadow:0 2px 10px rgba(0,0,0,.18)"></div>
<svg style="left:1918px;top:909px" width="26" height="28" viewBox="0 0 26 28"><path d="M4.500 1 H19 Q24 1 24 6 V27 L18.500 24.500 H4.500 Q1.500 24.500 1.500 21 V5 Q1.500 1 4.500 1Z" fill="#fff"/><path d="M6 16.500 Q12.500 21.500 19.500 16.500" fill="none" stroke="#2d4fd6" stroke-width="1.600" stroke-linecap="round"/></svg>
</body></html>
